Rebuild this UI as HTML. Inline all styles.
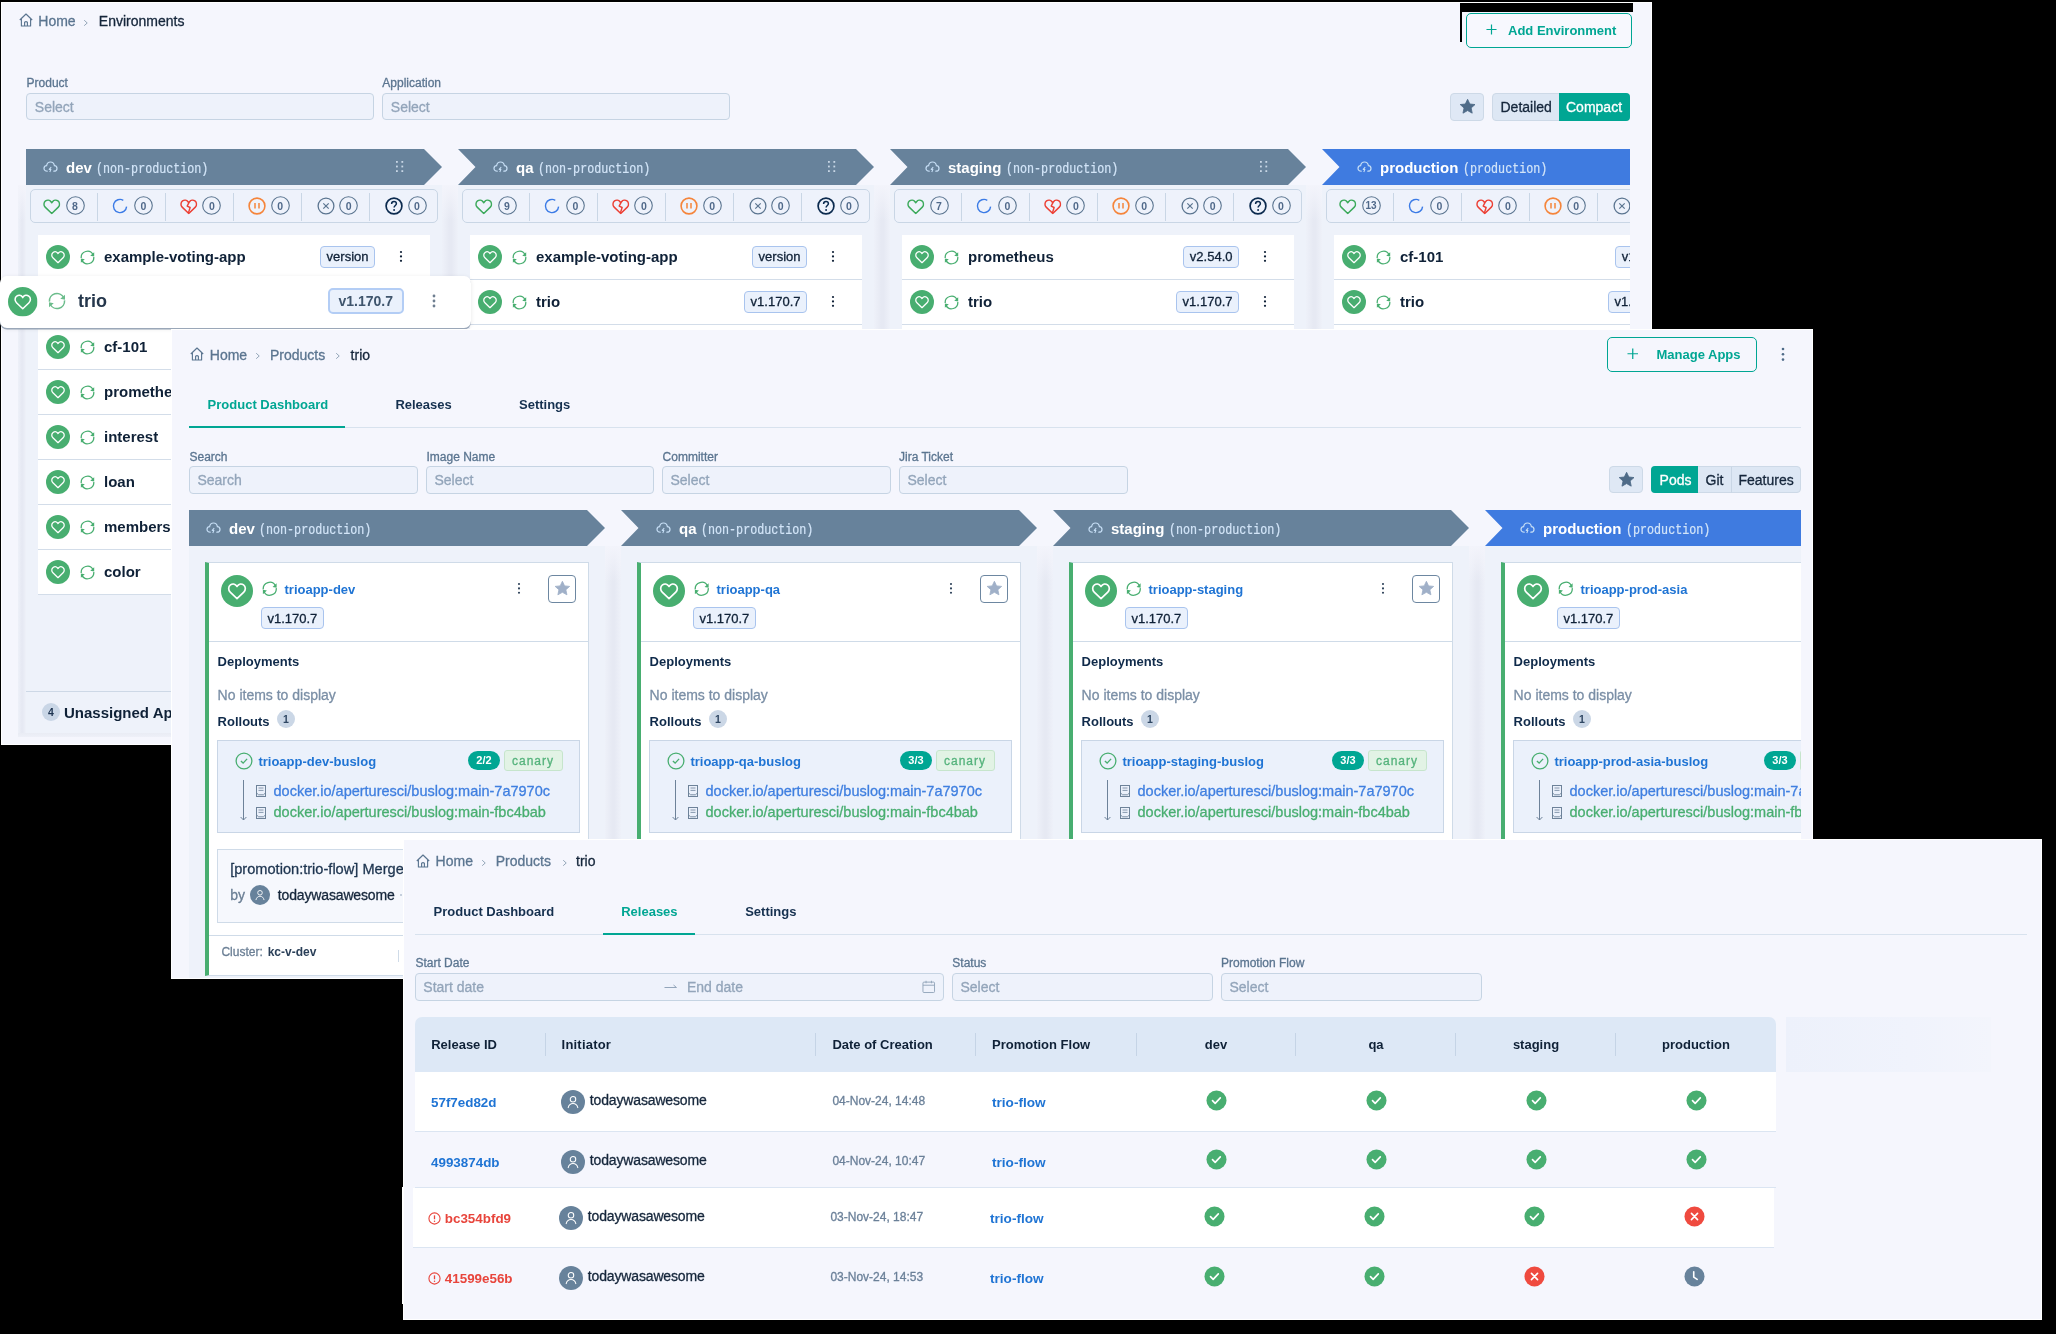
<!DOCTYPE html><html><head><meta charset="utf-8"><style>
*{box-sizing:border-box;margin:0;padding:0}
html,body{width:2056px;height:1334px;overflow:hidden;background:#000}
body{position:relative;font-family:"Liberation Sans",sans-serif}
.p{position:absolute;overflow:hidden;background:#f5f6fd;border:1px solid #fff}
.in{position:absolute;left:0;top:0;width:2056px;height:1334px;will-change:transform}
.t{position:absolute;white-space:nowrap;line-height:1;-webkit-text-stroke-width:0.3px}
.t[style*='font-weight:700']{-webkit-text-stroke-width:0}
.m{font-family:"Liberation Mono",monospace}
.r{position:absolute}
.i{position:absolute;overflow:visible}
.clip{position:absolute;overflow:hidden}
</style></head><body><div id="root" style="position:absolute;left:0;top:0;width:2056px;height:1334px;will-change:transform">

<svg width="0" height="0" style="position:absolute">
<defs>
<symbol id="home" viewBox="0 0 14 14"><path d="M0.8 7 L7 1 L13.2 7 M2.4 5.6 V13 H11.6 V5.6 M5.6 13 V9.2 Q7 8.2 8.4 9.2 V13" fill="none" stroke="currentColor" stroke-width="1.15" stroke-linejoin="round"/></symbol>
<symbol id="sep" viewBox="0 0 6 8"><path d="M1.3 1.2 L4.6 4.2 L1.3 7.2" fill="none" stroke="currentColor" stroke-width="0.95"/></symbol>
<symbol id="heartc" viewBox="0 0 24 24"><circle cx="12" cy="12" r="12" fill="#48ae70"/><path d="M12 17.7 L6.9 12.8 C5.3 11.2 5.4 8.6 7.1 7.4 C8.6 6.3 10.6 6.7 11.6 8 L12 8.6 L12.4 8 C13.4 6.7 15.4 6.3 16.9 7.4 C18.6 8.6 18.7 11.2 17.1 12.8 Z" fill="none" stroke="#fff" stroke-width="1.25" stroke-linejoin="round"/></symbol>
<symbol id="sync" viewBox="0 0 16 16"><path d="M1.3 8.6 A6.7 6.7 0 0 1 13.9 4.9" fill="none" stroke="currentColor" stroke-width="1.35"/><path d="M15.1 2.4 L15.1 6.9 L10.9 6.1 Z" fill="currentColor"/><path d="M14.7 7.4 A6.7 6.7 0 0 1 2.1 11.1" fill="none" stroke="currentColor" stroke-width="1.35"/><path d="M0.9 13.6 L0.9 9.1 L5.1 9.9 Z" fill="currentColor"/></symbol>
<symbol id="hearto" viewBox="0 0 18 16"><path d="M9 15 L2.2 8.4 C0.4 6.6 0.6 3.5 2.6 2 C4.4 0.7 6.9 1.1 8.2 2.8 L9 3.8 L9.8 2.8 C11.1 1.1 13.6 0.7 15.4 2 C17.4 3.5 17.6 6.6 15.8 8.4 Z" fill="none" stroke="currentColor" stroke-width="1.5" stroke-linejoin="round"/></symbol>
<symbol id="heartb" viewBox="0 0 18 16"><path d="M9 15 L2.2 8.4 C0.4 6.6 0.6 3.5 2.6 2 C4.4 0.7 6.9 1.1 8.2 2.8 L9 3.8 L9.8 2.8 C11.1 1.1 13.6 0.7 15.4 2 C17.4 3.5 17.6 6.6 15.8 8.4 Z" fill="none" stroke="currentColor" stroke-width="1.5" stroke-linejoin="round"/><path d="M9.2 3.6 L7.4 7.4 L10.4 8.8 L8.6 14.6" fill="none" stroke="currentColor" stroke-width="1.5" stroke-linejoin="round"/></symbol>
<symbol id="spin" viewBox="0 0 16 16"><path d="M14.6 8.6 A6.6 6.6 0 1 1 11.3 2.28" fill="none" stroke="currentColor" stroke-width="1.4"/></symbol>
<symbol id="pause" viewBox="0 0 18 18"><circle cx="9" cy="9" r="7.9" fill="none" stroke="currentColor" stroke-width="1.6"/><path d="M7 6 V11.5 M11 6 V11.5" stroke="currentColor" stroke-width="1.5"/></symbol>
<symbol id="xc" viewBox="0 0 18 18"><circle cx="9" cy="9" r="7.9" fill="none" stroke="currentColor" stroke-width="1.3"/><path d="M6.3 6.3 L11.7 11.7 M11.7 6.3 L6.3 11.7" stroke="currentColor" stroke-width="1.2"/></symbol>
<symbol id="qc" viewBox="0 0 18 18"><circle cx="9" cy="9" r="7.9" fill="none" stroke="currentColor" stroke-width="1.7"/><path d="M6.6 7 C6.6 5.5 7.7 4.6 9 4.6 C10.3 4.6 11.4 5.5 11.4 6.8 C11.4 8.4 9.1 8.6 9.1 10.6" fill="none" stroke="currentColor" stroke-width="1.5"/><circle cx="9.1" cy="13" r="0.95" fill="currentColor"/></symbol>
<symbol id="cloud" viewBox="0 0 15 12"><path d="M4.2 10.2 C2.2 10.2 1 8.9 1 7.4 C1 5.9 2.2 4.8 3.6 4.7 C4 2.5 5.6 1 7.5 1 C9.4 1 11 2.5 11.4 4.7 C12.8 4.8 14 5.9 14 7.4 C14 8.9 12.8 10.2 10.8 10.2" fill="none" stroke="currentColor" stroke-width="1.2" stroke-linecap="round"/><path d="M8.2 6 L6.2 8.4 L7.9 8.4 L6.8 11" fill="none" stroke="currentColor" stroke-width="1.1" stroke-linejoin="round"/></symbol>
<symbol id="star" viewBox="0 0 16 16"><path d="M8 1.2 L10.1 5.6 L14.9 6.1 L11.3 9.3 L12.3 14.1 L8 11.7 L3.7 14.1 L4.7 9.3 L1.1 6.1 L5.9 5.6 Z" fill="currentColor" stroke="currentColor" stroke-width="0.8" stroke-linejoin="round"/></symbol>
<symbol id="plus" viewBox="0 0 12 12"><path d="M6 0.5 V11.5 M0.5 6 H11.5" stroke="currentColor" stroke-width="1.3"/></symbol>
<symbol id="checko" viewBox="0 0 18 18"><circle cx="9" cy="9" r="7.9" fill="none" stroke="currentColor" stroke-width="1.3"/><path d="M5.9 9.1 L8.1 11.1 L12.1 6.9" fill="none" stroke="currentColor" stroke-width="1.35"/></symbol>
<symbol id="img" viewBox="0 0 10 12"><rect x="0.5" y="0.5" width="9" height="11" fill="none" stroke="currentColor" stroke-width="1"/><path d="M2.5 3 H7.5 M2.5 5.4 H7.5" fill="none" stroke="currentColor" stroke-width="0.8"/><path d="M0.8 8.2 L2.6 9.8 H7.4 L9.2 8.2" fill="none" stroke="currentColor" stroke-width="0.9"/></symbol>
<symbol id="avatar" viewBox="0 0 24 24"><circle cx="12" cy="12" r="12" fill="#67829b"/><circle cx="12" cy="9.3" r="2.75" fill="none" stroke="#fff" stroke-width="1.05"/><path d="M7.2 17.6 C7.8 15 9.7 13.5 12 13.5 C14.3 13.5 16.2 15 16.8 17.6" fill="none" stroke="#fff" stroke-width="1.05" stroke-linecap="round"/></symbol>
<symbol id="okc" viewBox="0 0 22 22"><circle cx="11" cy="11" r="10.5" fill="#48ae70"/><path d="M6.8 11.2 L9.6 14 L15 8.2" fill="none" stroke="#fff" stroke-width="1.7" stroke-linecap="round" stroke-linejoin="round"/></symbol>
<symbol id="errc" viewBox="0 0 22 22"><circle cx="11" cy="11" r="10.5" fill="#ef4a3f"/><path d="M7.8 7.8 L14.2 14.2 M14.2 7.8 L7.8 14.2" fill="none" stroke="#fff" stroke-width="1.7" stroke-linecap="round"/></symbol>
<symbol id="clockc" viewBox="0 0 22 22"><circle cx="11" cy="11" r="10.5" fill="#67829b"/><path d="M10.2 6 V11.6 L13.8 14" fill="none" stroke="#fff" stroke-width="1.7" stroke-linecap="round" stroke-linejoin="round"/></symbol>
<symbol id="warn" viewBox="0 0 14 14"><circle cx="7" cy="7" r="6" fill="none" stroke="currentColor" stroke-width="1.2"/><path d="M7 3.6 V7.8" stroke="currentColor" stroke-width="1.4"/><circle cx="7" cy="10" r="0.8" fill="currentColor"/></symbol>
<symbol id="cal" viewBox="0 0 14 14"><rect x="1" y="2.2" width="12" height="10.8" rx="1" fill="none" stroke="currentColor" stroke-width="1"/><path d="M1 5.4 H13 M4.2 0.8 V3.4 M9.8 0.8 V3.4" stroke="currentColor" stroke-width="1"/></symbol>
</defs>
</svg>

<div class="p" style="left:1px;top:2px;width:1651px;height:743px;"><div class="in" style="left:-2px;top:-3px">
<div class="r" style="left:0.00px;top:0.00px;width:2056.00px;height:1334.00px;background:#f5f6fd"></div>
<svg class="i" style="left:19.00px;top:13.20px;width:14.00px;height:14.00px;color:#5b7590;"><use href="#home"/></svg>
<div class="t" style="left:38.30px;top:14.45px;font-size:14px;color:#5b7590;">Home</div>
<div class="t" style="left:98.80px;top:14.45px;font-size:14px;color:#15263b;">Environments</div>
<svg class="i" style="left:83.20px;top:19.10px;width:5.50px;height:7.60px;color:#8599ad;"><use href="#sep"/></svg>
<div class="r" style="left:1460.00px;top:3.00px;width:173.00px;height:9.00px;background:#000"></div>
<div class="r" style="left:1460.00px;top:3.00px;width:2.00px;height:39.00px;background:#000"></div>
<div class="r" style="left:1466.00px;top:12.50px;width:166.00px;height:35.00px;border:1.5px solid #00a693;border-radius:5px;background:#f7f8fe"></div>
<svg class="i" style="left:1486.00px;top:23.50px;width:11.00px;height:11.00px;color:#00a693;"><use href="#plus"/></svg>
<div class="t" style="left:1508.00px;top:23.79px;font-size:13px;color:#00a693;font-weight:700;">Add Environment</div>
<div class="t" style="left:26.60px;top:76.84px;font-size:12px;color:#5b7590;">Product</div>
<div class="t" style="left:382.30px;top:76.84px;font-size:12px;color:#5b7590;">Application</div>
<div class="r" style="left:26.00px;top:93.30px;width:347.50px;height:27.20px;background:#eef2fb;border:1px solid #c6d4e3;border-radius:4px"></div>
<div class="t" style="left:34.80px;top:100.15px;font-size:14px;color:#93a5ba;">Select</div>
<div class="r" style="left:382.00px;top:93.30px;width:347.50px;height:27.20px;background:#eef2fb;border:1px solid #c6d4e3;border-radius:4px"></div>
<div class="t" style="left:390.80px;top:100.15px;font-size:14px;color:#93a5ba;">Select</div>
<div class="r" style="left:1450.00px;top:93.20px;width:34.00px;height:27.60px;background:#dfe8f5;border:1px solid #cdd9e7;border-radius:4px"></div>
<svg class="i" style="left:1458.60px;top:98.40px;width:17.20px;height:17.20px;color:#4f6b88;"><use href="#star"/></svg>
<div class="r" style="left:1492.00px;top:93.20px;width:138.00px;height:27.60px;background:#dde7f4;border:1px solid #cdd9e7;border-radius:4px"></div>
<div class="r" style="left:1559.00px;top:93.20px;width:71.00px;height:27.60px;background:#00a693;border-radius:0 4px 4px 0"></div>
<div class="t" style="left:1500.50px;top:99.95px;font-size:14px;color:#15263b;">Detailed</div>
<div class="t" style="left:1566.00px;top:99.95px;font-size:14px;color:#fff;">Compact</div>
<div class="clip" style="left:18px;top:140px;width:1612px;height:605px"><div class="in" style="left:-18px;top:-140px">
<div class="r" style="left:26.00px;top:185.00px;width:416.00px;height:551.00px;background:#eef2fa"></div>
<div class="r" style="left:442.00px;top:185.00px;width:16.00px;height:551.00px;background-image:linear-gradient(to bottom,#f3f4fb 0px,rgba(243,244,251,0) 36px),linear-gradient(to right,#eef1f9,#e6e9f3 45%,#e6e9f3 60%,#eef1f9)"></div>
<div class="r" style="left:18.00px;top:185.00px;width:8.00px;height:551.00px;background-image:linear-gradient(to bottom,#f3f4fb 0px,rgba(243,244,251,0) 36px),linear-gradient(to right,#eef1f9,#e6e9f3 45%,#e6e9f3 60%,#eef1f9)"></div>
<div class="r" style="left:458.00px;top:185.00px;width:416.00px;height:551.00px;background:#eef2fa"></div>
<div class="r" style="left:874.00px;top:185.00px;width:16.00px;height:551.00px;background-image:linear-gradient(to bottom,#f3f4fb 0px,rgba(243,244,251,0) 36px),linear-gradient(to right,#eef1f9,#e6e9f3 45%,#e6e9f3 60%,#eef1f9)"></div>
<div class="r" style="left:890.00px;top:185.00px;width:416.00px;height:551.00px;background:#eef2fa"></div>
<div class="r" style="left:1306.00px;top:185.00px;width:16.00px;height:551.00px;background-image:linear-gradient(to bottom,#f3f4fb 0px,rgba(243,244,251,0) 36px),linear-gradient(to right,#eef1f9,#e6e9f3 45%,#e6e9f3 60%,#eef1f9)"></div>
<div class="r" style="left:1322.00px;top:185.00px;width:416.00px;height:551.00px;background:#eef2fa"></div>
<div class="r" style="left:1738.00px;top:185.00px;width:16.00px;height:551.00px;background-image:linear-gradient(to bottom,#f3f4fb 0px,rgba(243,244,251,0) 36px),linear-gradient(to right,#eef1f9,#e6e9f3 45%,#e6e9f3 60%,#eef1f9)"></div>
<svg class="i" style="left:26.00px;top:149.00px;width:416.00px;height:36.00px;" viewBox="0 0 416 36"><polygon points="0.0,0.0 398.0,0.0 416.0,18.0 398.0,36.0 0.0,36.0" fill="#67829b"/></svg>
<svg class="i" style="left:43.00px;top:161.00px;width:15.00px;height:12.00px;color:#c6def5;"><use href="#cloud"/></svg>
<div class="t" style="left:66.00px;top:160.30px;font-size:15px;color:#fff;font-weight:700;">dev</div>
<div class="t m" style="left:96.35px;top:162.07px;font-size:14px;color:#d3e5f8;-webkit-text-stroke-width:0.2px;transform:scaleX(0.836);transform-origin:0 0;">(non-production)</div>
<svg class="i" style="left:395.50px;top:161.40px;width:8.00px;height:12.00px;" viewBox="0 0 8 12"><rect x="0" y="0" width="1.8" height="1.8" fill="#c9d7e6"/><rect x="0" y="4.6" width="1.8" height="1.8" fill="#c9d7e6"/><rect x="0" y="9.2" width="1.8" height="1.8" fill="#c9d7e6"/><rect x="5.4" y="0" width="1.8" height="1.8" fill="#c9d7e6"/><rect x="5.4" y="4.6" width="1.8" height="1.8" fill="#c9d7e6"/><rect x="5.4" y="9.2" width="1.8" height="1.8" fill="#c9d7e6"/></svg>
<div class="r" style="left:30.00px;top:189.00px;width:408.00px;height:33.50px;background:#eef2fb;border:1px solid #c9d6e5;border-radius:5px"></div>
<svg class="i" style="left:43.25px;top:198.55px;width:17.50px;height:15.50px;color:#3daa5c;"><use href="#hearto"/></svg>
<svg class="i" style="left:65.50px;top:196.30px;width:19px;height:19px" viewBox="0 0 19 19"><circle cx="9.5" cy="9.5" r="8.8" fill="none" stroke="#5b7590" stroke-width="1.1"/></svg>
<div class="t" style="left:-125.00px;width:400px;text-align:center;top:200.81px;font-size:10.5px;color:#50698a;font-weight:700;">8</div>
<svg class="i" style="left:112.40px;top:197.80px;width:16.00px;height:16.00px;color:#3b7be6;"><use href="#spin"/></svg>
<svg class="i" style="left:133.90px;top:196.30px;width:19px;height:19px" viewBox="0 0 19 19"><circle cx="9.5" cy="9.5" r="8.8" fill="none" stroke="#5b7590" stroke-width="1.1"/></svg>
<div class="t" style="left:-56.60px;width:400px;text-align:center;top:200.81px;font-size:10.5px;color:#50698a;font-weight:700;">0</div>
<div class="r" style="left:96.60px;top:192.50px;width:1.00px;height:28.00px;background:#c9d6e5"></div>
<svg class="i" style="left:180.05px;top:198.55px;width:17.50px;height:15.50px;color:#ec4136;"><use href="#heartb"/></svg>
<svg class="i" style="left:202.30px;top:196.30px;width:19px;height:19px" viewBox="0 0 19 19"><circle cx="9.5" cy="9.5" r="8.8" fill="none" stroke="#5b7590" stroke-width="1.1"/></svg>
<div class="t" style="left:11.80px;width:400px;text-align:center;top:200.81px;font-size:10.5px;color:#50698a;font-weight:700;">0</div>
<div class="r" style="left:164.70px;top:192.50px;width:1.00px;height:28.00px;background:#c9d6e5"></div>
<svg class="i" style="left:248.20px;top:196.80px;width:18.00px;height:18.00px;color:#f5853b;"><use href="#pause"/></svg>
<svg class="i" style="left:270.70px;top:196.30px;width:19px;height:19px" viewBox="0 0 19 19"><circle cx="9.5" cy="9.5" r="8.8" fill="none" stroke="#5b7590" stroke-width="1.1"/></svg>
<div class="t" style="left:80.20px;width:400px;text-align:center;top:200.81px;font-size:10.5px;color:#50698a;font-weight:700;">0</div>
<div class="r" style="left:232.80px;top:192.50px;width:1.00px;height:28.00px;background:#c9d6e5"></div>
<svg class="i" style="left:316.60px;top:196.80px;width:18.00px;height:18.00px;color:#5b7590;"><use href="#xc"/></svg>
<svg class="i" style="left:339.10px;top:196.30px;width:19px;height:19px" viewBox="0 0 19 19"><circle cx="9.5" cy="9.5" r="8.8" fill="none" stroke="#5b7590" stroke-width="1.1"/></svg>
<div class="t" style="left:148.60px;width:400px;text-align:center;top:200.81px;font-size:10.5px;color:#50698a;font-weight:700;">0</div>
<div class="r" style="left:300.90px;top:192.50px;width:1.00px;height:28.00px;background:#c9d6e5"></div>
<svg class="i" style="left:385.00px;top:196.80px;width:18.00px;height:18.00px;color:#0b2a4e;"><use href="#qc"/></svg>
<svg class="i" style="left:407.50px;top:196.30px;width:19px;height:19px" viewBox="0 0 19 19"><circle cx="9.5" cy="9.5" r="8.8" fill="none" stroke="#5b7590" stroke-width="1.1"/></svg>
<div class="t" style="left:217.00px;width:400px;text-align:center;top:200.81px;font-size:10.5px;color:#50698a;font-weight:700;">0</div>
<div class="r" style="left:369.00px;top:192.50px;width:1.00px;height:28.00px;background:#c9d6e5"></div>
<div class="r" style="left:38.00px;top:235.00px;width:392.00px;height:45.00px;background:#fff;border-bottom:1px solid #d3dde9"></div>
<svg class="i" style="left:46.00px;top:245.00px;width:24.00px;height:24.00px;"><use href="#heartc"/></svg>
<svg class="i" style="left:79.50px;top:249.50px;width:15.00px;height:15.00px;color:#48ae70;"><use href="#sync"/></svg>
<div class="t" style="left:104.00px;top:249.30px;font-size:15px;color:#0f2137;font-weight:700;">example-voting-app</div>
<div class="r" style="left:319.59px;top:246.00px;width:55.91px;height:21.50px;background:#eaf1fc;border:1px solid #a9c4ee;border-radius:4px"></div>
<div class="t" style="left:147.55px;width:400px;text-align:center;top:250.42px;font-size:13px;color:#0f2137;">version</div>
<svg class="i" style="left:398.00px;top:249.10px;width:6.00px;height:14.80px;" viewBox="0 0 6 14.8"><circle cx="3" cy="3.00" r="1.1" fill="#0f2137"/><circle cx="3" cy="7.40" r="1.1" fill="#0f2137"/><circle cx="3" cy="11.80" r="1.1" fill="#0f2137"/></svg>
<div class="r" style="left:38.00px;top:280.00px;width:392.00px;height:45.00px;background:#fff;border-bottom:1px solid #d3dde9"></div>
<div class="r" style="left:38.00px;top:325.00px;width:392.00px;height:45.00px;background:#fff;border-bottom:1px solid #d3dde9"></div>
<svg class="i" style="left:46.00px;top:335.00px;width:24.00px;height:24.00px;"><use href="#heartc"/></svg>
<svg class="i" style="left:79.50px;top:339.50px;width:15.00px;height:15.00px;color:#48ae70;"><use href="#sync"/></svg>
<div class="t" style="left:104.00px;top:339.30px;font-size:15px;color:#0f2137;font-weight:700;">cf-101</div>
<div class="r" style="left:326.09px;top:336.00px;width:49.41px;height:21.50px;background:#eaf1fc;border:1px solid #a9c4ee;border-radius:4px"></div>
<div class="t" style="left:150.79px;width:400px;text-align:center;top:340.42px;font-size:13px;color:#0f2137;">v1.0.0</div>
<svg class="i" style="left:398.00px;top:339.10px;width:6.00px;height:14.80px;" viewBox="0 0 6 14.8"><circle cx="3" cy="3.00" r="1.1" fill="#0f2137"/><circle cx="3" cy="7.40" r="1.1" fill="#0f2137"/><circle cx="3" cy="11.80" r="1.1" fill="#0f2137"/></svg>
<div class="r" style="left:38.00px;top:370.00px;width:392.00px;height:45.00px;background:#fff;border-bottom:1px solid #d3dde9"></div>
<svg class="i" style="left:46.00px;top:380.00px;width:24.00px;height:24.00px;"><use href="#heartc"/></svg>
<svg class="i" style="left:79.50px;top:384.50px;width:15.00px;height:15.00px;color:#48ae70;"><use href="#sync"/></svg>
<div class="t" style="left:104.00px;top:384.30px;font-size:15px;color:#0f2137;font-weight:700;">prometheus</div>
<div class="r" style="left:318.86px;top:381.00px;width:56.64px;height:21.50px;background:#eaf1fc;border:1px solid #a9c4ee;border-radius:4px"></div>
<div class="t" style="left:147.18px;width:400px;text-align:center;top:385.42px;font-size:13px;color:#0f2137;">v2.54.0</div>
<svg class="i" style="left:398.00px;top:384.10px;width:6.00px;height:14.80px;" viewBox="0 0 6 14.8"><circle cx="3" cy="3.00" r="1.1" fill="#0f2137"/><circle cx="3" cy="7.40" r="1.1" fill="#0f2137"/><circle cx="3" cy="11.80" r="1.1" fill="#0f2137"/></svg>
<div class="r" style="left:38.00px;top:415.00px;width:392.00px;height:45.00px;background:#fff;border-bottom:1px solid #d3dde9"></div>
<svg class="i" style="left:46.00px;top:425.00px;width:24.00px;height:24.00px;"><use href="#heartc"/></svg>
<svg class="i" style="left:79.50px;top:429.50px;width:15.00px;height:15.00px;color:#48ae70;"><use href="#sync"/></svg>
<div class="t" style="left:104.00px;top:429.30px;font-size:15px;color:#0f2137;font-weight:700;">interest</div>
<div class="r" style="left:326.09px;top:426.00px;width:49.41px;height:21.50px;background:#eaf1fc;border:1px solid #a9c4ee;border-radius:4px"></div>
<div class="t" style="left:150.79px;width:400px;text-align:center;top:430.42px;font-size:13px;color:#0f2137;">v1.0.0</div>
<svg class="i" style="left:398.00px;top:429.10px;width:6.00px;height:14.80px;" viewBox="0 0 6 14.8"><circle cx="3" cy="3.00" r="1.1" fill="#0f2137"/><circle cx="3" cy="7.40" r="1.1" fill="#0f2137"/><circle cx="3" cy="11.80" r="1.1" fill="#0f2137"/></svg>
<div class="r" style="left:38.00px;top:460.00px;width:392.00px;height:45.00px;background:#fff;border-bottom:1px solid #d3dde9"></div>
<svg class="i" style="left:46.00px;top:470.00px;width:24.00px;height:24.00px;"><use href="#heartc"/></svg>
<svg class="i" style="left:79.50px;top:474.50px;width:15.00px;height:15.00px;color:#48ae70;"><use href="#sync"/></svg>
<div class="t" style="left:104.00px;top:474.30px;font-size:15px;color:#0f2137;font-weight:700;">loan</div>
<div class="r" style="left:326.09px;top:471.00px;width:49.41px;height:21.50px;background:#eaf1fc;border:1px solid #a9c4ee;border-radius:4px"></div>
<div class="t" style="left:150.79px;width:400px;text-align:center;top:475.42px;font-size:13px;color:#0f2137;">v1.0.0</div>
<svg class="i" style="left:398.00px;top:474.10px;width:6.00px;height:14.80px;" viewBox="0 0 6 14.8"><circle cx="3" cy="3.00" r="1.1" fill="#0f2137"/><circle cx="3" cy="7.40" r="1.1" fill="#0f2137"/><circle cx="3" cy="11.80" r="1.1" fill="#0f2137"/></svg>
<div class="r" style="left:38.00px;top:505.00px;width:392.00px;height:45.00px;background:#fff;border-bottom:1px solid #d3dde9"></div>
<svg class="i" style="left:46.00px;top:515.00px;width:24.00px;height:24.00px;"><use href="#heartc"/></svg>
<svg class="i" style="left:79.50px;top:519.50px;width:15.00px;height:15.00px;color:#48ae70;"><use href="#sync"/></svg>
<div class="t" style="left:104.00px;top:519.30px;font-size:15px;color:#0f2137;font-weight:700;">membership</div>
<div class="r" style="left:326.09px;top:516.00px;width:49.41px;height:21.50px;background:#eaf1fc;border:1px solid #a9c4ee;border-radius:4px"></div>
<div class="t" style="left:150.79px;width:400px;text-align:center;top:520.42px;font-size:13px;color:#0f2137;">v1.0.0</div>
<svg class="i" style="left:398.00px;top:519.10px;width:6.00px;height:14.80px;" viewBox="0 0 6 14.8"><circle cx="3" cy="3.00" r="1.1" fill="#0f2137"/><circle cx="3" cy="7.40" r="1.1" fill="#0f2137"/><circle cx="3" cy="11.80" r="1.1" fill="#0f2137"/></svg>
<div class="r" style="left:38.00px;top:550.00px;width:392.00px;height:45.00px;background:#fff;border-bottom:1px solid #d3dde9"></div>
<svg class="i" style="left:46.00px;top:560.00px;width:24.00px;height:24.00px;"><use href="#heartc"/></svg>
<svg class="i" style="left:79.50px;top:564.50px;width:15.00px;height:15.00px;color:#48ae70;"><use href="#sync"/></svg>
<div class="t" style="left:104.00px;top:564.30px;font-size:15px;color:#0f2137;font-weight:700;">color</div>
<div class="r" style="left:326.09px;top:561.00px;width:49.41px;height:21.50px;background:#eaf1fc;border:1px solid #a9c4ee;border-radius:4px"></div>
<div class="t" style="left:150.79px;width:400px;text-align:center;top:565.42px;font-size:13px;color:#0f2137;">v1.0.0</div>
<svg class="i" style="left:398.00px;top:564.10px;width:6.00px;height:14.80px;" viewBox="0 0 6 14.8"><circle cx="3" cy="3.00" r="1.1" fill="#0f2137"/><circle cx="3" cy="7.40" r="1.1" fill="#0f2137"/><circle cx="3" cy="11.80" r="1.1" fill="#0f2137"/></svg>
<svg class="i" style="left:458.00px;top:149.00px;width:416.00px;height:36.00px;" viewBox="0 0 416 36"><polygon points="0.0,0.0 398.0,0.0 416.0,18.0 398.0,36.0 0.0,36.0 17.5,18.0" fill="#67829b"/></svg>
<svg class="i" style="left:493.00px;top:161.00px;width:15.00px;height:12.00px;color:#c6def5;"><use href="#cloud"/></svg>
<div class="t" style="left:516.00px;top:160.30px;font-size:15px;color:#fff;font-weight:700;">qa</div>
<div class="t m" style="left:538.00px;top:162.07px;font-size:14px;color:#d3e5f8;-webkit-text-stroke-width:0.2px;transform:scaleX(0.836);transform-origin:0 0;">(non-production)</div>
<svg class="i" style="left:827.50px;top:161.40px;width:8.00px;height:12.00px;" viewBox="0 0 8 12"><rect x="0" y="0" width="1.8" height="1.8" fill="#c9d7e6"/><rect x="0" y="4.6" width="1.8" height="1.8" fill="#c9d7e6"/><rect x="0" y="9.2" width="1.8" height="1.8" fill="#c9d7e6"/><rect x="5.4" y="0" width="1.8" height="1.8" fill="#c9d7e6"/><rect x="5.4" y="4.6" width="1.8" height="1.8" fill="#c9d7e6"/><rect x="5.4" y="9.2" width="1.8" height="1.8" fill="#c9d7e6"/></svg>
<div class="r" style="left:462.00px;top:189.00px;width:408.00px;height:33.50px;background:#eef2fb;border:1px solid #c9d6e5;border-radius:5px"></div>
<svg class="i" style="left:475.25px;top:198.55px;width:17.50px;height:15.50px;color:#3daa5c;"><use href="#hearto"/></svg>
<svg class="i" style="left:497.50px;top:196.30px;width:19px;height:19px" viewBox="0 0 19 19"><circle cx="9.5" cy="9.5" r="8.8" fill="none" stroke="#5b7590" stroke-width="1.1"/></svg>
<div class="t" style="left:307.00px;width:400px;text-align:center;top:200.81px;font-size:10.5px;color:#50698a;font-weight:700;">9</div>
<svg class="i" style="left:544.40px;top:197.80px;width:16.00px;height:16.00px;color:#3b7be6;"><use href="#spin"/></svg>
<svg class="i" style="left:565.90px;top:196.30px;width:19px;height:19px" viewBox="0 0 19 19"><circle cx="9.5" cy="9.5" r="8.8" fill="none" stroke="#5b7590" stroke-width="1.1"/></svg>
<div class="t" style="left:375.40px;width:400px;text-align:center;top:200.81px;font-size:10.5px;color:#50698a;font-weight:700;">0</div>
<div class="r" style="left:528.60px;top:192.50px;width:1.00px;height:28.00px;background:#c9d6e5"></div>
<svg class="i" style="left:612.05px;top:198.55px;width:17.50px;height:15.50px;color:#ec4136;"><use href="#heartb"/></svg>
<svg class="i" style="left:634.30px;top:196.30px;width:19px;height:19px" viewBox="0 0 19 19"><circle cx="9.5" cy="9.5" r="8.8" fill="none" stroke="#5b7590" stroke-width="1.1"/></svg>
<div class="t" style="left:443.80px;width:400px;text-align:center;top:200.81px;font-size:10.5px;color:#50698a;font-weight:700;">0</div>
<div class="r" style="left:596.70px;top:192.50px;width:1.00px;height:28.00px;background:#c9d6e5"></div>
<svg class="i" style="left:680.20px;top:196.80px;width:18.00px;height:18.00px;color:#f5853b;"><use href="#pause"/></svg>
<svg class="i" style="left:702.70px;top:196.30px;width:19px;height:19px" viewBox="0 0 19 19"><circle cx="9.5" cy="9.5" r="8.8" fill="none" stroke="#5b7590" stroke-width="1.1"/></svg>
<div class="t" style="left:512.20px;width:400px;text-align:center;top:200.81px;font-size:10.5px;color:#50698a;font-weight:700;">0</div>
<div class="r" style="left:664.80px;top:192.50px;width:1.00px;height:28.00px;background:#c9d6e5"></div>
<svg class="i" style="left:748.60px;top:196.80px;width:18.00px;height:18.00px;color:#5b7590;"><use href="#xc"/></svg>
<svg class="i" style="left:771.10px;top:196.30px;width:19px;height:19px" viewBox="0 0 19 19"><circle cx="9.5" cy="9.5" r="8.8" fill="none" stroke="#5b7590" stroke-width="1.1"/></svg>
<div class="t" style="left:580.60px;width:400px;text-align:center;top:200.81px;font-size:10.5px;color:#50698a;font-weight:700;">0</div>
<div class="r" style="left:732.90px;top:192.50px;width:1.00px;height:28.00px;background:#c9d6e5"></div>
<svg class="i" style="left:817.00px;top:196.80px;width:18.00px;height:18.00px;color:#0b2a4e;"><use href="#qc"/></svg>
<svg class="i" style="left:839.50px;top:196.30px;width:19px;height:19px" viewBox="0 0 19 19"><circle cx="9.5" cy="9.5" r="8.8" fill="none" stroke="#5b7590" stroke-width="1.1"/></svg>
<div class="t" style="left:649.00px;width:400px;text-align:center;top:200.81px;font-size:10.5px;color:#50698a;font-weight:700;">0</div>
<div class="r" style="left:801.00px;top:192.50px;width:1.00px;height:28.00px;background:#c9d6e5"></div>
<div class="r" style="left:470.00px;top:235.00px;width:392.00px;height:45.00px;background:#fff;border-bottom:1px solid #d3dde9"></div>
<svg class="i" style="left:478.00px;top:245.00px;width:24.00px;height:24.00px;"><use href="#heartc"/></svg>
<svg class="i" style="left:511.50px;top:249.50px;width:15.00px;height:15.00px;color:#48ae70;"><use href="#sync"/></svg>
<div class="t" style="left:536.00px;top:249.30px;font-size:15px;color:#0f2137;font-weight:700;">example-voting-app</div>
<div class="r" style="left:751.59px;top:246.00px;width:55.91px;height:21.50px;background:#eaf1fc;border:1px solid #a9c4ee;border-radius:4px"></div>
<div class="t" style="left:579.55px;width:400px;text-align:center;top:250.42px;font-size:13px;color:#0f2137;">version</div>
<svg class="i" style="left:830.00px;top:249.10px;width:6.00px;height:14.80px;" viewBox="0 0 6 14.8"><circle cx="3" cy="3.00" r="1.1" fill="#0f2137"/><circle cx="3" cy="7.40" r="1.1" fill="#0f2137"/><circle cx="3" cy="11.80" r="1.1" fill="#0f2137"/></svg>
<div class="r" style="left:470.00px;top:280.00px;width:392.00px;height:45.00px;background:#fff;border-bottom:1px solid #d3dde9"></div>
<svg class="i" style="left:478.00px;top:290.00px;width:24.00px;height:24.00px;"><use href="#heartc"/></svg>
<svg class="i" style="left:511.50px;top:294.50px;width:15.00px;height:15.00px;color:#48ae70;"><use href="#sync"/></svg>
<div class="t" style="left:536.00px;top:294.30px;font-size:15px;color:#0f2137;font-weight:700;">trio</div>
<div class="r" style="left:743.63px;top:291.00px;width:63.87px;height:21.50px;background:#eaf1fc;border:1px solid #a9c4ee;border-radius:4px"></div>
<div class="t" style="left:575.56px;width:400px;text-align:center;top:295.42px;font-size:13px;color:#0f2137;">v1.170.7</div>
<svg class="i" style="left:830.00px;top:294.10px;width:6.00px;height:14.80px;" viewBox="0 0 6 14.8"><circle cx="3" cy="3.00" r="1.1" fill="#0f2137"/><circle cx="3" cy="7.40" r="1.1" fill="#0f2137"/><circle cx="3" cy="11.80" r="1.1" fill="#0f2137"/></svg>
<div class="r" style="left:470.00px;top:325.00px;width:392.00px;height:45.00px;background:#fff;border-bottom:1px solid #d3dde9"></div>
<svg class="i" style="left:478.00px;top:335.00px;width:24.00px;height:24.00px;"><use href="#heartc"/></svg>
<svg class="i" style="left:511.50px;top:339.50px;width:15.00px;height:15.00px;color:#48ae70;"><use href="#sync"/></svg>
<div class="t" style="left:536.00px;top:339.30px;font-size:15px;color:#0f2137;font-weight:700;">cf-101</div>
<div class="r" style="left:758.09px;top:336.00px;width:49.41px;height:21.50px;background:#eaf1fc;border:1px solid #a9c4ee;border-radius:4px"></div>
<div class="t" style="left:582.79px;width:400px;text-align:center;top:340.42px;font-size:13px;color:#0f2137;">v1.0.0</div>
<svg class="i" style="left:830.00px;top:339.10px;width:6.00px;height:14.80px;" viewBox="0 0 6 14.8"><circle cx="3" cy="3.00" r="1.1" fill="#0f2137"/><circle cx="3" cy="7.40" r="1.1" fill="#0f2137"/><circle cx="3" cy="11.80" r="1.1" fill="#0f2137"/></svg>
<svg class="i" style="left:890.00px;top:149.00px;width:416.00px;height:36.00px;" viewBox="0 0 416 36"><polygon points="0.0,0.0 398.0,0.0 416.0,18.0 398.0,36.0 0.0,36.0 17.5,18.0" fill="#67829b"/></svg>
<svg class="i" style="left:925.00px;top:161.00px;width:15.00px;height:12.00px;color:#c6def5;"><use href="#cloud"/></svg>
<div class="t" style="left:948.00px;top:160.30px;font-size:15px;color:#fff;font-weight:700;">staging</div>
<div class="t m" style="left:1005.83px;top:162.07px;font-size:14px;color:#d3e5f8;-webkit-text-stroke-width:0.2px;transform:scaleX(0.836);transform-origin:0 0;">(non-production)</div>
<svg class="i" style="left:1259.50px;top:161.40px;width:8.00px;height:12.00px;" viewBox="0 0 8 12"><rect x="0" y="0" width="1.8" height="1.8" fill="#c9d7e6"/><rect x="0" y="4.6" width="1.8" height="1.8" fill="#c9d7e6"/><rect x="0" y="9.2" width="1.8" height="1.8" fill="#c9d7e6"/><rect x="5.4" y="0" width="1.8" height="1.8" fill="#c9d7e6"/><rect x="5.4" y="4.6" width="1.8" height="1.8" fill="#c9d7e6"/><rect x="5.4" y="9.2" width="1.8" height="1.8" fill="#c9d7e6"/></svg>
<div class="r" style="left:894.00px;top:189.00px;width:408.00px;height:33.50px;background:#eef2fb;border:1px solid #c9d6e5;border-radius:5px"></div>
<svg class="i" style="left:907.25px;top:198.55px;width:17.50px;height:15.50px;color:#3daa5c;"><use href="#hearto"/></svg>
<svg class="i" style="left:929.50px;top:196.30px;width:19px;height:19px" viewBox="0 0 19 19"><circle cx="9.5" cy="9.5" r="8.8" fill="none" stroke="#5b7590" stroke-width="1.1"/></svg>
<div class="t" style="left:739.00px;width:400px;text-align:center;top:200.81px;font-size:10.5px;color:#50698a;font-weight:700;">7</div>
<svg class="i" style="left:976.40px;top:197.80px;width:16.00px;height:16.00px;color:#3b7be6;"><use href="#spin"/></svg>
<svg class="i" style="left:997.90px;top:196.30px;width:19px;height:19px" viewBox="0 0 19 19"><circle cx="9.5" cy="9.5" r="8.8" fill="none" stroke="#5b7590" stroke-width="1.1"/></svg>
<div class="t" style="left:807.40px;width:400px;text-align:center;top:200.81px;font-size:10.5px;color:#50698a;font-weight:700;">0</div>
<div class="r" style="left:960.60px;top:192.50px;width:1.00px;height:28.00px;background:#c9d6e5"></div>
<svg class="i" style="left:1044.05px;top:198.55px;width:17.50px;height:15.50px;color:#ec4136;"><use href="#heartb"/></svg>
<svg class="i" style="left:1066.30px;top:196.30px;width:19px;height:19px" viewBox="0 0 19 19"><circle cx="9.5" cy="9.5" r="8.8" fill="none" stroke="#5b7590" stroke-width="1.1"/></svg>
<div class="t" style="left:875.80px;width:400px;text-align:center;top:200.81px;font-size:10.5px;color:#50698a;font-weight:700;">0</div>
<div class="r" style="left:1028.70px;top:192.50px;width:1.00px;height:28.00px;background:#c9d6e5"></div>
<svg class="i" style="left:1112.20px;top:196.80px;width:18.00px;height:18.00px;color:#f5853b;"><use href="#pause"/></svg>
<svg class="i" style="left:1134.70px;top:196.30px;width:19px;height:19px" viewBox="0 0 19 19"><circle cx="9.5" cy="9.5" r="8.8" fill="none" stroke="#5b7590" stroke-width="1.1"/></svg>
<div class="t" style="left:944.20px;width:400px;text-align:center;top:200.81px;font-size:10.5px;color:#50698a;font-weight:700;">0</div>
<div class="r" style="left:1096.80px;top:192.50px;width:1.00px;height:28.00px;background:#c9d6e5"></div>
<svg class="i" style="left:1180.60px;top:196.80px;width:18.00px;height:18.00px;color:#5b7590;"><use href="#xc"/></svg>
<svg class="i" style="left:1203.10px;top:196.30px;width:19px;height:19px" viewBox="0 0 19 19"><circle cx="9.5" cy="9.5" r="8.8" fill="none" stroke="#5b7590" stroke-width="1.1"/></svg>
<div class="t" style="left:1012.60px;width:400px;text-align:center;top:200.81px;font-size:10.5px;color:#50698a;font-weight:700;">0</div>
<div class="r" style="left:1164.90px;top:192.50px;width:1.00px;height:28.00px;background:#c9d6e5"></div>
<svg class="i" style="left:1249.00px;top:196.80px;width:18.00px;height:18.00px;color:#0b2a4e;"><use href="#qc"/></svg>
<svg class="i" style="left:1271.50px;top:196.30px;width:19px;height:19px" viewBox="0 0 19 19"><circle cx="9.5" cy="9.5" r="8.8" fill="none" stroke="#5b7590" stroke-width="1.1"/></svg>
<div class="t" style="left:1081.00px;width:400px;text-align:center;top:200.81px;font-size:10.5px;color:#50698a;font-weight:700;">0</div>
<div class="r" style="left:1233.00px;top:192.50px;width:1.00px;height:28.00px;background:#c9d6e5"></div>
<div class="r" style="left:902.00px;top:235.00px;width:392.00px;height:45.00px;background:#fff;border-bottom:1px solid #d3dde9"></div>
<svg class="i" style="left:910.00px;top:245.00px;width:24.00px;height:24.00px;"><use href="#heartc"/></svg>
<svg class="i" style="left:943.50px;top:249.50px;width:15.00px;height:15.00px;color:#48ae70;"><use href="#sync"/></svg>
<div class="t" style="left:968.00px;top:249.30px;font-size:15px;color:#0f2137;font-weight:700;">prometheus</div>
<div class="r" style="left:1182.86px;top:246.00px;width:56.64px;height:21.50px;background:#eaf1fc;border:1px solid #a9c4ee;border-radius:4px"></div>
<div class="t" style="left:1011.18px;width:400px;text-align:center;top:250.42px;font-size:13px;color:#0f2137;">v2.54.0</div>
<svg class="i" style="left:1262.00px;top:249.10px;width:6.00px;height:14.80px;" viewBox="0 0 6 14.8"><circle cx="3" cy="3.00" r="1.1" fill="#0f2137"/><circle cx="3" cy="7.40" r="1.1" fill="#0f2137"/><circle cx="3" cy="11.80" r="1.1" fill="#0f2137"/></svg>
<div class="r" style="left:902.00px;top:280.00px;width:392.00px;height:45.00px;background:#fff;border-bottom:1px solid #d3dde9"></div>
<svg class="i" style="left:910.00px;top:290.00px;width:24.00px;height:24.00px;"><use href="#heartc"/></svg>
<svg class="i" style="left:943.50px;top:294.50px;width:15.00px;height:15.00px;color:#48ae70;"><use href="#sync"/></svg>
<div class="t" style="left:968.00px;top:294.30px;font-size:15px;color:#0f2137;font-weight:700;">trio</div>
<div class="r" style="left:1175.63px;top:291.00px;width:63.87px;height:21.50px;background:#eaf1fc;border:1px solid #a9c4ee;border-radius:4px"></div>
<div class="t" style="left:1007.56px;width:400px;text-align:center;top:295.42px;font-size:13px;color:#0f2137;">v1.170.7</div>
<svg class="i" style="left:1262.00px;top:294.10px;width:6.00px;height:14.80px;" viewBox="0 0 6 14.8"><circle cx="3" cy="3.00" r="1.1" fill="#0f2137"/><circle cx="3" cy="7.40" r="1.1" fill="#0f2137"/><circle cx="3" cy="11.80" r="1.1" fill="#0f2137"/></svg>
<div class="r" style="left:902.00px;top:325.00px;width:392.00px;height:45.00px;background:#fff;border-bottom:1px solid #d3dde9"></div>
<svg class="i" style="left:910.00px;top:335.00px;width:24.00px;height:24.00px;"><use href="#heartc"/></svg>
<svg class="i" style="left:943.50px;top:339.50px;width:15.00px;height:15.00px;color:#48ae70;"><use href="#sync"/></svg>
<div class="t" style="left:968.00px;top:339.30px;font-size:15px;color:#0f2137;font-weight:700;">cf-101</div>
<div class="r" style="left:1190.09px;top:336.00px;width:49.41px;height:21.50px;background:#eaf1fc;border:1px solid #a9c4ee;border-radius:4px"></div>
<div class="t" style="left:1014.79px;width:400px;text-align:center;top:340.42px;font-size:13px;color:#0f2137;">v1.0.0</div>
<svg class="i" style="left:1262.00px;top:339.10px;width:6.00px;height:14.80px;" viewBox="0 0 6 14.8"><circle cx="3" cy="3.00" r="1.1" fill="#0f2137"/><circle cx="3" cy="7.40" r="1.1" fill="#0f2137"/><circle cx="3" cy="11.80" r="1.1" fill="#0f2137"/></svg>
<svg class="i" style="left:1322.00px;top:149.00px;width:416.00px;height:36.00px;" viewBox="0 0 416 36"><polygon points="0.0,0.0 398.0,0.0 416.0,18.0 398.0,36.0 0.0,36.0 17.5,18.0" fill="#3f7be0"/></svg>
<svg class="i" style="left:1357.00px;top:161.00px;width:15.00px;height:12.00px;color:#c6def5;"><use href="#cloud"/></svg>
<div class="t" style="left:1380.00px;top:160.30px;font-size:15px;color:#fff;font-weight:700;">production</div>
<div class="t m" style="left:1462.82px;top:162.07px;font-size:14px;color:#d3e5f8;-webkit-text-stroke-width:0.2px;transform:scaleX(0.836);transform-origin:0 0;">(production)</div>
<div class="r" style="left:1326.00px;top:189.00px;width:408.00px;height:33.50px;background:#eef2fb;border:1px solid #c9d6e5;border-radius:5px"></div>
<svg class="i" style="left:1339.25px;top:198.55px;width:17.50px;height:15.50px;color:#3daa5c;"><use href="#hearto"/></svg>
<svg class="i" style="left:1361.50px;top:196.30px;width:19px;height:19px" viewBox="0 0 19 19"><circle cx="9.5" cy="9.5" r="8.8" fill="none" stroke="#5b7590" stroke-width="1.1"/></svg>
<div class="t" style="left:1171.00px;width:400px;text-align:center;top:201.23px;font-size:10px;color:#50698a;font-weight:700;">13</div>
<svg class="i" style="left:1408.40px;top:197.80px;width:16.00px;height:16.00px;color:#3b7be6;"><use href="#spin"/></svg>
<svg class="i" style="left:1429.90px;top:196.30px;width:19px;height:19px" viewBox="0 0 19 19"><circle cx="9.5" cy="9.5" r="8.8" fill="none" stroke="#5b7590" stroke-width="1.1"/></svg>
<div class="t" style="left:1239.40px;width:400px;text-align:center;top:200.81px;font-size:10.5px;color:#50698a;font-weight:700;">0</div>
<div class="r" style="left:1392.60px;top:192.50px;width:1.00px;height:28.00px;background:#c9d6e5"></div>
<svg class="i" style="left:1476.05px;top:198.55px;width:17.50px;height:15.50px;color:#ec4136;"><use href="#heartb"/></svg>
<svg class="i" style="left:1498.30px;top:196.30px;width:19px;height:19px" viewBox="0 0 19 19"><circle cx="9.5" cy="9.5" r="8.8" fill="none" stroke="#5b7590" stroke-width="1.1"/></svg>
<div class="t" style="left:1307.80px;width:400px;text-align:center;top:200.81px;font-size:10.5px;color:#50698a;font-weight:700;">0</div>
<div class="r" style="left:1460.70px;top:192.50px;width:1.00px;height:28.00px;background:#c9d6e5"></div>
<svg class="i" style="left:1544.20px;top:196.80px;width:18.00px;height:18.00px;color:#f5853b;"><use href="#pause"/></svg>
<svg class="i" style="left:1566.70px;top:196.30px;width:19px;height:19px" viewBox="0 0 19 19"><circle cx="9.5" cy="9.5" r="8.8" fill="none" stroke="#5b7590" stroke-width="1.1"/></svg>
<div class="t" style="left:1376.20px;width:400px;text-align:center;top:200.81px;font-size:10.5px;color:#50698a;font-weight:700;">0</div>
<div class="r" style="left:1528.80px;top:192.50px;width:1.00px;height:28.00px;background:#c9d6e5"></div>
<svg class="i" style="left:1612.60px;top:196.80px;width:18.00px;height:18.00px;color:#5b7590;"><use href="#xc"/></svg>
<svg class="i" style="left:1635.10px;top:196.30px;width:19px;height:19px" viewBox="0 0 19 19"><circle cx="9.5" cy="9.5" r="8.8" fill="none" stroke="#5b7590" stroke-width="1.1"/></svg>
<div class="t" style="left:1444.60px;width:400px;text-align:center;top:200.81px;font-size:10.5px;color:#50698a;font-weight:700;">0</div>
<div class="r" style="left:1596.90px;top:192.50px;width:1.00px;height:28.00px;background:#c9d6e5"></div>
<svg class="i" style="left:1681.00px;top:196.80px;width:18.00px;height:18.00px;color:#0b2a4e;"><use href="#qc"/></svg>
<svg class="i" style="left:1703.50px;top:196.30px;width:19px;height:19px" viewBox="0 0 19 19"><circle cx="9.5" cy="9.5" r="8.8" fill="none" stroke="#5b7590" stroke-width="1.1"/></svg>
<div class="t" style="left:1513.00px;width:400px;text-align:center;top:200.81px;font-size:10.5px;color:#50698a;font-weight:700;">0</div>
<div class="r" style="left:1665.00px;top:192.50px;width:1.00px;height:28.00px;background:#c9d6e5"></div>
<div class="r" style="left:1334.00px;top:235.00px;width:392.00px;height:45.00px;background:#fff;border-bottom:1px solid #d3dde9"></div>
<svg class="i" style="left:1342.00px;top:245.00px;width:24.00px;height:24.00px;"><use href="#heartc"/></svg>
<svg class="i" style="left:1375.50px;top:249.50px;width:15.00px;height:15.00px;color:#48ae70;"><use href="#sync"/></svg>
<div class="t" style="left:1400.00px;top:249.30px;font-size:15px;color:#0f2137;font-weight:700;">cf-101</div>
<div class="r" style="left:1614.86px;top:246.00px;width:56.64px;height:21.50px;background:#eaf1fc;border:1px solid #a9c4ee;border-radius:4px"></div>
<div class="t" style="left:1443.18px;width:400px;text-align:center;top:250.42px;font-size:13px;color:#0f2137;">v1.0.12</div>
<svg class="i" style="left:1694.00px;top:249.10px;width:6.00px;height:14.80px;" viewBox="0 0 6 14.8"><circle cx="3" cy="3.00" r="1.1" fill="#0f2137"/><circle cx="3" cy="7.40" r="1.1" fill="#0f2137"/><circle cx="3" cy="11.80" r="1.1" fill="#0f2137"/></svg>
<div class="r" style="left:1334.00px;top:280.00px;width:392.00px;height:45.00px;background:#fff;border-bottom:1px solid #d3dde9"></div>
<svg class="i" style="left:1342.00px;top:290.00px;width:24.00px;height:24.00px;"><use href="#heartc"/></svg>
<svg class="i" style="left:1375.50px;top:294.50px;width:15.00px;height:15.00px;color:#48ae70;"><use href="#sync"/></svg>
<div class="t" style="left:1400.00px;top:294.30px;font-size:15px;color:#0f2137;font-weight:700;">trio</div>
<div class="r" style="left:1607.63px;top:291.00px;width:63.87px;height:21.50px;background:#eaf1fc;border:1px solid #a9c4ee;border-radius:4px"></div>
<div class="t" style="left:1439.56px;width:400px;text-align:center;top:295.42px;font-size:13px;color:#0f2137;">v1.170.7</div>
<svg class="i" style="left:1694.00px;top:294.10px;width:6.00px;height:14.80px;" viewBox="0 0 6 14.8"><circle cx="3" cy="3.00" r="1.1" fill="#0f2137"/><circle cx="3" cy="7.40" r="1.1" fill="#0f2137"/><circle cx="3" cy="11.80" r="1.1" fill="#0f2137"/></svg>
<div class="r" style="left:1334.00px;top:325.00px;width:392.00px;height:45.00px;background:#fff;border-bottom:1px solid #d3dde9"></div>
<svg class="i" style="left:1342.00px;top:335.00px;width:24.00px;height:24.00px;"><use href="#heartc"/></svg>
<svg class="i" style="left:1375.50px;top:339.50px;width:15.00px;height:15.00px;color:#48ae70;"><use href="#sync"/></svg>
<div class="t" style="left:1400.00px;top:339.30px;font-size:15px;color:#0f2137;font-weight:700;">prometheus</div>
<div class="r" style="left:1614.86px;top:336.00px;width:56.64px;height:21.50px;background:#eaf1fc;border:1px solid #a9c4ee;border-radius:4px"></div>
<div class="t" style="left:1443.18px;width:400px;text-align:center;top:340.42px;font-size:13px;color:#0f2137;">v2.54.0</div>
<svg class="i" style="left:1694.00px;top:339.10px;width:6.00px;height:14.80px;" viewBox="0 0 6 14.8"><circle cx="3" cy="3.00" r="1.1" fill="#0f2137"/><circle cx="3" cy="7.40" r="1.1" fill="#0f2137"/><circle cx="3" cy="11.80" r="1.1" fill="#0f2137"/></svg>
<div class="r" style="left:26.00px;top:691.00px;width:416.00px;height:1.00px;background:#cdd8e6"></div>
<svg class="i" style="left:42px;top:703px;width:18px;height:18px" viewBox="0 0 18 18"><circle cx="9" cy="9" r="9" fill="#c9d6e6"/></svg>
<div class="t" style="left:-149.00px;width:400px;text-align:center;top:707.11px;font-size:10.5px;color:#1c3350;font-weight:700;">4</div>
<div class="t" style="left:64.00px;top:704.80px;font-size:15px;color:#0f2137;font-weight:700;">Unassigned Apps</div>
<div class="r" style="left:18.00px;top:733.00px;width:432.00px;height:4.00px;background:linear-gradient(to bottom,#e9ecf4,#eef0f8)"></div>
</div></div>
</div></div>
<div class="r" style="left:0.00px;top:276.00px;width:471.00px;height:52.00px;background:#fff;border-radius:7px;box-shadow:0 1.5px 0 #9aa7b8, 0 1px 4px rgba(0,0,0,0.10)"></div>
<div style="position:absolute;left:0;top:0;width:2056px;height:1334px;filter:blur(0.3px)">
<svg class="i" style="left:7.50px;top:286.50px;width:29.50px;height:29.50px;"><use href="#heartc"/></svg>
<svg class="i" style="left:48.00px;top:292.00px;width:18.00px;height:18.00px;color:#6cbd8c;"><use href="#sync"/></svg>
<div class="t" style="left:78.00px;top:291.76px;font-size:18px;color:#25374c;font-weight:700;">trio</div>
<div class="r" style="left:328.00px;top:288.00px;width:75.50px;height:25.50px;background:#eaf1fc;border:2px solid #b3cdf5;border-radius:5px"></div>
<div class="t" style="left:165.80px;width:400px;text-align:center;top:294.15px;font-size:14px;color:#3f556d;font-weight:700;">v1.170.7</div>
<svg class="i" style="left:430.50px;top:293.00px;width:6.00px;height:16.00px;" viewBox="0 0 6 16"><circle cx="3" cy="3.00" r="1.4" fill="#6e7e90"/><circle cx="3" cy="8.00" r="1.4" fill="#6e7e90"/><circle cx="3" cy="13.00" r="1.4" fill="#6e7e90"/></svg>
</div>
<div class="p" style="left:171px;top:329px;width:1642px;height:650px;"><div class="in" style="left:-172px;top:-330px">
<div class="r" style="left:0.00px;top:0.00px;width:2056.00px;height:1334.00px;background:#f5f6fd"></div>
<svg class="i" style="left:190.00px;top:346.50px;width:14.00px;height:14.00px;color:#5b7590;"><use href="#home"/></svg>
<div class="t" style="left:209.80px;top:347.65px;font-size:14px;color:#5b7590;">Home</div>
<div class="t" style="left:270.00px;top:347.65px;font-size:14px;color:#5b7590;">Products</div>
<div class="t" style="left:350.60px;top:347.65px;font-size:14px;color:#15263b;">trio</div>
<svg class="i" style="left:254.70px;top:352.30px;width:5.50px;height:7.60px;color:#8599ad;"><use href="#sep"/></svg>
<svg class="i" style="left:335.20px;top:352.30px;width:5.50px;height:7.60px;color:#8599ad;"><use href="#sep"/></svg>
<div class="r" style="left:1607.00px;top:336.50px;width:150.00px;height:35.50px;border:1.5px solid #00a693;border-radius:5px"></div>
<svg class="i" style="left:1626.50px;top:347.50px;width:11.50px;height:11.50px;color:#00a693;"><use href="#plus"/></svg>
<div class="t" style="left:1656.50px;top:348.29px;font-size:13px;color:#00a693;font-weight:700;">Manage Apps</div>
<svg class="i" style="left:1780.00px;top:346.20px;width:6.00px;height:16.60px;" viewBox="0 0 6 16.6"><circle cx="3" cy="3.00" r="1.3" fill="#4f6b88"/><circle cx="3" cy="8.30" r="1.3" fill="#4f6b88"/><circle cx="3" cy="13.60" r="1.3" fill="#4f6b88"/></svg>
<div class="r" style="left:189.00px;top:427.00px;width:1612.00px;height:1.00px;background:#d8e2ee"></div>
<div class="r" style="left:189.00px;top:425.80px;width:156.00px;height:2.60px;background:#00a693"></div>
<div class="t" style="left:207.60px;top:398.19px;font-size:13px;color:#00a693;font-weight:700;">Product Dashboard</div>
<div class="t" style="left:395.40px;top:398.19px;font-size:13px;color:#15304f;font-weight:700;">Releases</div>
<div class="t" style="left:519.00px;top:398.19px;font-size:13px;color:#15304f;font-weight:700;">Settings</div>
<div class="t" style="left:189.50px;top:450.54px;font-size:12px;color:#5b7590;">Search</div>
<div class="t" style="left:426.50px;top:450.54px;font-size:12px;color:#5b7590;">Image Name</div>
<div class="t" style="left:662.60px;top:450.54px;font-size:12px;color:#5b7590;">Committer</div>
<div class="t" style="left:899.00px;top:450.54px;font-size:12px;color:#5b7590;">Jira Ticket</div>
<div class="r" style="left:189.00px;top:466.40px;width:229.00px;height:27.30px;background:#eef2fb;border:1px solid #c6d4e3;border-radius:4px"></div>
<div class="t" style="left:197.40px;top:473.15px;font-size:14px;color:#93a5ba;">Search</div>
<div class="r" style="left:426.00px;top:466.40px;width:228.00px;height:27.30px;background:#eef2fb;border:1px solid #c6d4e3;border-radius:4px"></div>
<div class="t" style="left:434.40px;top:473.15px;font-size:14px;color:#93a5ba;">Select</div>
<div class="r" style="left:662.00px;top:466.40px;width:229.00px;height:27.30px;background:#eef2fb;border:1px solid #c6d4e3;border-radius:4px"></div>
<div class="t" style="left:670.40px;top:473.15px;font-size:14px;color:#93a5ba;">Select</div>
<div class="r" style="left:899.00px;top:466.40px;width:229.00px;height:27.30px;background:#eef2fb;border:1px solid #c6d4e3;border-radius:4px"></div>
<div class="t" style="left:907.40px;top:473.15px;font-size:14px;color:#93a5ba;">Select</div>
<div class="r" style="left:1609.00px;top:466.30px;width:34.00px;height:27.20px;background:#dfe8f5;border:1px solid #cdd9e7;border-radius:4px"></div>
<svg class="i" style="left:1617.80px;top:471.00px;width:17.20px;height:17.20px;color:#4f6b88;"><use href="#star"/></svg>
<div class="r" style="left:1651.00px;top:466.30px;width:150.00px;height:27.20px;background:#dde7f4;border:1px solid #cdd9e7;border-radius:4px"></div>
<div class="r" style="left:1651.00px;top:466.30px;width:47.00px;height:27.20px;background:#00a693;border-radius:4px 0 0 4px"></div>
<div class="r" style="left:1731.00px;top:467.00px;width:1.00px;height:26.00px;background:#c9d6e5"></div>
<div class="t" style="left:1659.60px;top:473.45px;font-size:14px;color:#fff;">Pods</div>
<div class="t" style="left:1705.50px;top:473.45px;font-size:14px;color:#15263b;">Git</div>
<div class="t" style="left:1738.50px;top:473.45px;font-size:14px;color:#15263b;">Features</div>
<div class="clip" style="left:180px;top:500px;width:1621px;height:479px"><div class="in" style="left:-180px;top:-500px">
<div class="r" style="left:189.00px;top:546.00px;width:416.00px;height:440.00px;background:#eef2fa"></div>
<div class="r" style="left:605.00px;top:546.00px;width:16.00px;height:440.00px;background-image:linear-gradient(to bottom,#f3f4fb 0px,rgba(243,244,251,0) 36px),linear-gradient(to right,#eef1f9,#e6e9f3 45%,#e6e9f3 60%,#eef1f9)"></div>
<div class="r" style="left:621.00px;top:546.00px;width:416.00px;height:440.00px;background:#eef2fa"></div>
<div class="r" style="left:1037.00px;top:546.00px;width:16.00px;height:440.00px;background-image:linear-gradient(to bottom,#f3f4fb 0px,rgba(243,244,251,0) 36px),linear-gradient(to right,#eef1f9,#e6e9f3 45%,#e6e9f3 60%,#eef1f9)"></div>
<div class="r" style="left:1053.00px;top:546.00px;width:416.00px;height:440.00px;background:#eef2fa"></div>
<div class="r" style="left:1469.00px;top:546.00px;width:16.00px;height:440.00px;background-image:linear-gradient(to bottom,#f3f4fb 0px,rgba(243,244,251,0) 36px),linear-gradient(to right,#eef1f9,#e6e9f3 45%,#e6e9f3 60%,#eef1f9)"></div>
<div class="r" style="left:1485.00px;top:546.00px;width:416.00px;height:440.00px;background:#eef2fa"></div>
<div class="r" style="left:1901.00px;top:546.00px;width:16.00px;height:440.00px;background-image:linear-gradient(to bottom,#f3f4fb 0px,rgba(243,244,251,0) 36px),linear-gradient(to right,#eef1f9,#e6e9f3 45%,#e6e9f3 60%,#eef1f9)"></div>
<svg class="i" style="left:189.00px;top:510.00px;width:416.00px;height:36.00px;" viewBox="0 0 416 36"><polygon points="0.0,0.0 398.0,0.0 416.0,18.0 398.0,36.0 0.0,36.0" fill="#67829b"/></svg>
<svg class="i" style="left:206.00px;top:522.00px;width:15.00px;height:12.00px;color:#c6def5;"><use href="#cloud"/></svg>
<div class="t" style="left:229.00px;top:521.30px;font-size:15px;color:#fff;font-weight:700;">dev</div>
<div class="t m" style="left:259.35px;top:523.07px;font-size:14px;color:#d3e5f8;-webkit-text-stroke-width:0.2px;transform:scaleX(0.836);transform-origin:0 0;">(non-production)</div>
<div class="r" style="left:205.00px;top:562.00px;width:384.00px;height:414.00px;background:#fff;border:1px solid #cfdbe8;border-left:4px solid #48ae70"></div>
<svg class="i" style="left:221.00px;top:575.00px;width:32.00px;height:32.00px;"><use href="#heartc"/></svg>
<svg class="i" style="left:262.20px;top:581.30px;width:15.50px;height:15.50px;color:#48ae70;"><use href="#sync"/></svg>
<div class="t" style="left:284.50px;top:582.99px;font-size:13px;color:#1f74d4;font-weight:700;">trioapp-dev</div>
<svg class="i" style="left:516.00px;top:580.60px;width:6.00px;height:14.80px;" viewBox="0 0 6 14.8"><circle cx="3" cy="3.00" r="1.05" fill="#2d4159"/><circle cx="3" cy="7.40" r="1.05" fill="#2d4159"/><circle cx="3" cy="11.80" r="1.05" fill="#2d4159"/></svg>
<div class="r" style="left:548.00px;top:575.40px;width:28.00px;height:27.60px;background:#fff;border:1.5px solid #6d87a1;border-radius:4px"></div>
<svg class="i" style="left:553.60px;top:580.20px;width:16.80px;height:16.80px;color:#a0b0c8;"><use href="#star"/></svg>
<div class="r" style="left:261.20px;top:607.40px;width:62.40px;height:21.20px;background:#eaf1fc;border:1px solid #a9c4ee;border-radius:4px"></div>
<div class="t" style="left:92.40px;width:400px;text-align:center;top:611.67px;font-size:13px;color:#0f2137;">v1.170.7</div>
<div class="r" style="left:209.00px;top:641.00px;width:380.00px;height:1.00px;background:#cfdbe8"></div>
<div class="t" style="left:217.60px;top:654.99px;font-size:13px;color:#0f2a4a;font-weight:700;">Deployments</div>
<div class="t" style="left:217.60px;top:688.15px;font-size:14px;color:#7b8fa6;">No items to display</div>
<div class="t" style="left:217.60px;top:714.99px;font-size:13px;color:#0f2a4a;font-weight:700;">Rollouts</div>
<svg class="i" style="left:277.00px;top:710px;width:18px;height:18px" viewBox="0 0 18 18"><circle cx="9" cy="9" r="9" fill="#cbd7e6"/></svg>
<div class="t" style="left:86.00px;width:400px;text-align:center;top:713.61px;font-size:10.5px;color:#2f4763;font-weight:700;">1</div>
<div class="r" style="left:217.00px;top:740.00px;width:363.00px;height:92.50px;background:#ebf1fb;border:1px solid #c9d6e6"></div>
<svg class="i" style="left:235.00px;top:752.00px;width:18.00px;height:18.00px;color:#48ae70;"><use href="#checko"/></svg>
<div class="t" style="left:258.40px;top:754.99px;font-size:13px;color:#1f74d4;font-weight:700;">trioapp-dev-buslog</div>
<div class="r" style="left:468.00px;top:750.80px;width:32.00px;height:19.20px;background:#00a693;border-radius:10px"></div>
<div class="t" style="left:284.00px;width:400px;text-align:center;top:754.99px;font-size:11px;color:#fff;font-weight:700;">2/2</div>
<div class="r" style="left:504.00px;top:750.00px;width:59.00px;height:21.00px;background:#e2f3e5;border:1px solid #c6e5cc;border-radius:3px"></div>
<div class="t" style="left:512.00px;top:755.14px;font-size:12px;color:#55b37c;letter-spacing:1.0px;">canary</div>
<svg class="i" style="left:240.00px;top:779.00px;width:8.00px;height:43.00px;" viewBox="0 0 8 43"><path d="M3.5 1 V41 M0.6 38 L3.5 41 L6.4 38" fill="none" stroke="#6d8299" stroke-width="1"/></svg>
<svg class="i" style="left:256.00px;top:785.00px;width:10.00px;height:12.00px;color:#6d8299;"><use href="#img"/></svg>
<svg class="i" style="left:256.00px;top:807.00px;width:10.00px;height:12.00px;color:#6d8299;"><use href="#img"/></svg>
<div class="t" style="left:273.50px;top:783.92px;font-size:14.5px;color:#3f7fe0;">docker.io/aperturesci/buslog:main-7a7970c</div>
<div class="t" style="left:273.50px;top:805.32px;font-size:14.5px;color:#48ae70;">docker.io/aperturesci/buslog:main-fbc4bab</div>
<div class="r" style="left:217.00px;top:849.00px;width:363.00px;height:74.00px;background:#f6f8fd;border:1px solid #cfdbe8"></div>
<div class="t" style="left:230.20px;top:861.64px;font-size:14.6px;color:#1e3550;">[promotion:trio-flow] Merge branch main</div>
<div class="t" style="left:230.20px;top:887.65px;font-size:14px;color:#6b7f95;">by</div>
<svg class="i" style="left:249.50px;top:885.00px;width:20.00px;height:20.00px;"><use href="#avatar"/></svg>
<div class="t" style="left:277.80px;top:887.65px;font-size:14px;color:#15263b;letter-spacing:-0.15px;">todaywasawesome</div>
<svg class="i" style="left:399.60px;top:893.8px;width:2px;height:2px" viewBox="0 0 2 2"><circle cx="1" cy="1" r="1" fill="#b5c2d2"/></svg>
<div class="r" style="left:209.00px;top:935.00px;width:380.00px;height:1.00px;background:#cfdbe8"></div>
<div class="t" style="left:221.40px;top:946.44px;font-size:12px;color:#6b7f95;">Cluster:</div>
<div class="t" style="left:267.70px;top:946.44px;font-size:12px;color:#2a3f58;font-weight:700;">kc-v-dev</div>
<div class="r" style="left:398.00px;top:950.00px;width:1.00px;height:12.00px;background:#cfdbe8"></div>
<svg class="i" style="left:621.00px;top:510.00px;width:416.00px;height:36.00px;" viewBox="0 0 416 36"><polygon points="0.0,0.0 398.0,0.0 416.0,18.0 398.0,36.0 0.0,36.0 17.5,18.0" fill="#67829b"/></svg>
<svg class="i" style="left:656.00px;top:522.00px;width:15.00px;height:12.00px;color:#c6def5;"><use href="#cloud"/></svg>
<div class="t" style="left:679.00px;top:521.30px;font-size:15px;color:#fff;font-weight:700;">qa</div>
<div class="t m" style="left:701.00px;top:523.07px;font-size:14px;color:#d3e5f8;-webkit-text-stroke-width:0.2px;transform:scaleX(0.836);transform-origin:0 0;">(non-production)</div>
<div class="r" style="left:637.00px;top:562.00px;width:384.00px;height:414.00px;background:#fff;border:1px solid #cfdbe8;border-left:4px solid #48ae70"></div>
<svg class="i" style="left:653.00px;top:575.00px;width:32.00px;height:32.00px;"><use href="#heartc"/></svg>
<svg class="i" style="left:694.20px;top:581.30px;width:15.50px;height:15.50px;color:#48ae70;"><use href="#sync"/></svg>
<div class="t" style="left:716.50px;top:582.99px;font-size:13px;color:#1f74d4;font-weight:700;">trioapp-qa</div>
<svg class="i" style="left:948.00px;top:580.60px;width:6.00px;height:14.80px;" viewBox="0 0 6 14.8"><circle cx="3" cy="3.00" r="1.05" fill="#2d4159"/><circle cx="3" cy="7.40" r="1.05" fill="#2d4159"/><circle cx="3" cy="11.80" r="1.05" fill="#2d4159"/></svg>
<div class="r" style="left:980.00px;top:575.40px;width:28.00px;height:27.60px;background:#fff;border:1.5px solid #6d87a1;border-radius:4px"></div>
<svg class="i" style="left:985.60px;top:580.20px;width:16.80px;height:16.80px;color:#a0b0c8;"><use href="#star"/></svg>
<div class="r" style="left:693.20px;top:607.40px;width:62.40px;height:21.20px;background:#eaf1fc;border:1px solid #a9c4ee;border-radius:4px"></div>
<div class="t" style="left:524.40px;width:400px;text-align:center;top:611.67px;font-size:13px;color:#0f2137;">v1.170.7</div>
<div class="r" style="left:641.00px;top:641.00px;width:380.00px;height:1.00px;background:#cfdbe8"></div>
<div class="t" style="left:649.60px;top:654.99px;font-size:13px;color:#0f2a4a;font-weight:700;">Deployments</div>
<div class="t" style="left:649.60px;top:688.15px;font-size:14px;color:#7b8fa6;">No items to display</div>
<div class="t" style="left:649.60px;top:714.99px;font-size:13px;color:#0f2a4a;font-weight:700;">Rollouts</div>
<svg class="i" style="left:709.00px;top:710px;width:18px;height:18px" viewBox="0 0 18 18"><circle cx="9" cy="9" r="9" fill="#cbd7e6"/></svg>
<div class="t" style="left:518.00px;width:400px;text-align:center;top:713.61px;font-size:10.5px;color:#2f4763;font-weight:700;">1</div>
<div class="r" style="left:649.00px;top:740.00px;width:363.00px;height:92.50px;background:#ebf1fb;border:1px solid #c9d6e6"></div>
<svg class="i" style="left:667.00px;top:752.00px;width:18.00px;height:18.00px;color:#48ae70;"><use href="#checko"/></svg>
<div class="t" style="left:690.40px;top:754.99px;font-size:13px;color:#1f74d4;font-weight:700;">trioapp-qa-buslog</div>
<div class="r" style="left:900.00px;top:750.80px;width:32.00px;height:19.20px;background:#00a693;border-radius:10px"></div>
<div class="t" style="left:716.00px;width:400px;text-align:center;top:754.99px;font-size:11px;color:#fff;font-weight:700;">3/3</div>
<div class="r" style="left:936.00px;top:750.00px;width:59.00px;height:21.00px;background:#e2f3e5;border:1px solid #c6e5cc;border-radius:3px"></div>
<div class="t" style="left:944.00px;top:755.14px;font-size:12px;color:#55b37c;letter-spacing:1.0px;">canary</div>
<svg class="i" style="left:672.00px;top:779.00px;width:8.00px;height:43.00px;" viewBox="0 0 8 43"><path d="M3.5 1 V41 M0.6 38 L3.5 41 L6.4 38" fill="none" stroke="#6d8299" stroke-width="1"/></svg>
<svg class="i" style="left:688.00px;top:785.00px;width:10.00px;height:12.00px;color:#6d8299;"><use href="#img"/></svg>
<svg class="i" style="left:688.00px;top:807.00px;width:10.00px;height:12.00px;color:#6d8299;"><use href="#img"/></svg>
<div class="t" style="left:705.50px;top:783.92px;font-size:14.5px;color:#3f7fe0;">docker.io/aperturesci/buslog:main-7a7970c</div>
<div class="t" style="left:705.50px;top:805.32px;font-size:14.5px;color:#48ae70;">docker.io/aperturesci/buslog:main-fbc4bab</div>
<div class="r" style="left:649.00px;top:849.00px;width:363.00px;height:74.00px;background:#f6f8fd;border:1px solid #cfdbe8"></div>
<div class="t" style="left:662.20px;top:861.64px;font-size:14.6px;color:#1e3550;">[promotion:trio-flow] Merge branch main</div>
<div class="t" style="left:662.20px;top:887.65px;font-size:14px;color:#6b7f95;">by</div>
<svg class="i" style="left:681.50px;top:885.00px;width:20.00px;height:20.00px;"><use href="#avatar"/></svg>
<div class="t" style="left:709.80px;top:887.65px;font-size:14px;color:#15263b;letter-spacing:-0.15px;">todaywasawesome</div>
<svg class="i" style="left:831.60px;top:893.8px;width:2px;height:2px" viewBox="0 0 2 2"><circle cx="1" cy="1" r="1" fill="#b5c2d2"/></svg>
<div class="r" style="left:641.00px;top:935.00px;width:380.00px;height:1.00px;background:#cfdbe8"></div>
<div class="t" style="left:653.40px;top:946.44px;font-size:12px;color:#6b7f95;">Cluster:</div>
<div class="t" style="left:699.70px;top:946.44px;font-size:12px;color:#2a3f58;font-weight:700;">kc-v-qa</div>
<div class="r" style="left:830.00px;top:950.00px;width:1.00px;height:12.00px;background:#cfdbe8"></div>
<svg class="i" style="left:1053.00px;top:510.00px;width:416.00px;height:36.00px;" viewBox="0 0 416 36"><polygon points="0.0,0.0 398.0,0.0 416.0,18.0 398.0,36.0 0.0,36.0 17.5,18.0" fill="#67829b"/></svg>
<svg class="i" style="left:1088.00px;top:522.00px;width:15.00px;height:12.00px;color:#c6def5;"><use href="#cloud"/></svg>
<div class="t" style="left:1111.00px;top:521.30px;font-size:15px;color:#fff;font-weight:700;">staging</div>
<div class="t m" style="left:1168.83px;top:523.07px;font-size:14px;color:#d3e5f8;-webkit-text-stroke-width:0.2px;transform:scaleX(0.836);transform-origin:0 0;">(non-production)</div>
<div class="r" style="left:1069.00px;top:562.00px;width:384.00px;height:414.00px;background:#fff;border:1px solid #cfdbe8;border-left:4px solid #48ae70"></div>
<svg class="i" style="left:1085.00px;top:575.00px;width:32.00px;height:32.00px;"><use href="#heartc"/></svg>
<svg class="i" style="left:1126.20px;top:581.30px;width:15.50px;height:15.50px;color:#48ae70;"><use href="#sync"/></svg>
<div class="t" style="left:1148.50px;top:582.99px;font-size:13px;color:#1f74d4;font-weight:700;">trioapp-staging</div>
<svg class="i" style="left:1380.00px;top:580.60px;width:6.00px;height:14.80px;" viewBox="0 0 6 14.8"><circle cx="3" cy="3.00" r="1.05" fill="#2d4159"/><circle cx="3" cy="7.40" r="1.05" fill="#2d4159"/><circle cx="3" cy="11.80" r="1.05" fill="#2d4159"/></svg>
<div class="r" style="left:1412.00px;top:575.40px;width:28.00px;height:27.60px;background:#fff;border:1.5px solid #6d87a1;border-radius:4px"></div>
<svg class="i" style="left:1417.60px;top:580.20px;width:16.80px;height:16.80px;color:#a0b0c8;"><use href="#star"/></svg>
<div class="r" style="left:1125.20px;top:607.40px;width:62.40px;height:21.20px;background:#eaf1fc;border:1px solid #a9c4ee;border-radius:4px"></div>
<div class="t" style="left:956.40px;width:400px;text-align:center;top:611.67px;font-size:13px;color:#0f2137;">v1.170.7</div>
<div class="r" style="left:1073.00px;top:641.00px;width:380.00px;height:1.00px;background:#cfdbe8"></div>
<div class="t" style="left:1081.60px;top:654.99px;font-size:13px;color:#0f2a4a;font-weight:700;">Deployments</div>
<div class="t" style="left:1081.60px;top:688.15px;font-size:14px;color:#7b8fa6;">No items to display</div>
<div class="t" style="left:1081.60px;top:714.99px;font-size:13px;color:#0f2a4a;font-weight:700;">Rollouts</div>
<svg class="i" style="left:1141.00px;top:710px;width:18px;height:18px" viewBox="0 0 18 18"><circle cx="9" cy="9" r="9" fill="#cbd7e6"/></svg>
<div class="t" style="left:950.00px;width:400px;text-align:center;top:713.61px;font-size:10.5px;color:#2f4763;font-weight:700;">1</div>
<div class="r" style="left:1081.00px;top:740.00px;width:363.00px;height:92.50px;background:#ebf1fb;border:1px solid #c9d6e6"></div>
<svg class="i" style="left:1099.00px;top:752.00px;width:18.00px;height:18.00px;color:#48ae70;"><use href="#checko"/></svg>
<div class="t" style="left:1122.40px;top:754.99px;font-size:13px;color:#1f74d4;font-weight:700;">trioapp-staging-buslog</div>
<div class="r" style="left:1332.00px;top:750.80px;width:32.00px;height:19.20px;background:#00a693;border-radius:10px"></div>
<div class="t" style="left:1148.00px;width:400px;text-align:center;top:754.99px;font-size:11px;color:#fff;font-weight:700;">3/3</div>
<div class="r" style="left:1368.00px;top:750.00px;width:59.00px;height:21.00px;background:#e2f3e5;border:1px solid #c6e5cc;border-radius:3px"></div>
<div class="t" style="left:1376.00px;top:755.14px;font-size:12px;color:#55b37c;letter-spacing:1.0px;">canary</div>
<svg class="i" style="left:1104.00px;top:779.00px;width:8.00px;height:43.00px;" viewBox="0 0 8 43"><path d="M3.5 1 V41 M0.6 38 L3.5 41 L6.4 38" fill="none" stroke="#6d8299" stroke-width="1"/></svg>
<svg class="i" style="left:1120.00px;top:785.00px;width:10.00px;height:12.00px;color:#6d8299;"><use href="#img"/></svg>
<svg class="i" style="left:1120.00px;top:807.00px;width:10.00px;height:12.00px;color:#6d8299;"><use href="#img"/></svg>
<div class="t" style="left:1137.50px;top:783.92px;font-size:14.5px;color:#3f7fe0;">docker.io/aperturesci/buslog:main-7a7970c</div>
<div class="t" style="left:1137.50px;top:805.32px;font-size:14.5px;color:#48ae70;">docker.io/aperturesci/buslog:main-fbc4bab</div>
<div class="r" style="left:1081.00px;top:849.00px;width:363.00px;height:74.00px;background:#f6f8fd;border:1px solid #cfdbe8"></div>
<div class="t" style="left:1094.20px;top:861.64px;font-size:14.6px;color:#1e3550;">[promotion:trio-flow] Merge branch main</div>
<div class="t" style="left:1094.20px;top:887.65px;font-size:14px;color:#6b7f95;">by</div>
<svg class="i" style="left:1113.50px;top:885.00px;width:20.00px;height:20.00px;"><use href="#avatar"/></svg>
<div class="t" style="left:1141.80px;top:887.65px;font-size:14px;color:#15263b;letter-spacing:-0.15px;">todaywasawesome</div>
<svg class="i" style="left:1263.60px;top:893.8px;width:2px;height:2px" viewBox="0 0 2 2"><circle cx="1" cy="1" r="1" fill="#b5c2d2"/></svg>
<div class="r" style="left:1073.00px;top:935.00px;width:380.00px;height:1.00px;background:#cfdbe8"></div>
<div class="t" style="left:1085.40px;top:946.44px;font-size:12px;color:#6b7f95;">Cluster:</div>
<div class="t" style="left:1131.70px;top:946.44px;font-size:12px;color:#2a3f58;font-weight:700;">kc-v-staging</div>
<div class="r" style="left:1262.00px;top:950.00px;width:1.00px;height:12.00px;background:#cfdbe8"></div>
<svg class="i" style="left:1485.00px;top:510.00px;width:416.00px;height:36.00px;" viewBox="0 0 416 36"><polygon points="0.0,0.0 398.0,0.0 416.0,18.0 398.0,36.0 0.0,36.0 17.5,18.0" fill="#3f7be0"/></svg>
<svg class="i" style="left:1520.00px;top:522.00px;width:15.00px;height:12.00px;color:#c6def5;"><use href="#cloud"/></svg>
<div class="t" style="left:1543.00px;top:521.30px;font-size:15px;color:#fff;font-weight:700;">production</div>
<div class="t m" style="left:1625.82px;top:523.07px;font-size:14px;color:#d3e5f8;-webkit-text-stroke-width:0.2px;transform:scaleX(0.836);transform-origin:0 0;">(production)</div>
<div class="r" style="left:1501.00px;top:562.00px;width:384.00px;height:414.00px;background:#fff;border:1px solid #cfdbe8;border-left:4px solid #48ae70"></div>
<svg class="i" style="left:1517.00px;top:575.00px;width:32.00px;height:32.00px;"><use href="#heartc"/></svg>
<svg class="i" style="left:1558.20px;top:581.30px;width:15.50px;height:15.50px;color:#48ae70;"><use href="#sync"/></svg>
<div class="t" style="left:1580.50px;top:582.99px;font-size:13px;color:#1f74d4;font-weight:700;">trioapp-prod-asia</div>
<svg class="i" style="left:1812.00px;top:580.60px;width:6.00px;height:14.80px;" viewBox="0 0 6 14.8"><circle cx="3" cy="3.00" r="1.05" fill="#2d4159"/><circle cx="3" cy="7.40" r="1.05" fill="#2d4159"/><circle cx="3" cy="11.80" r="1.05" fill="#2d4159"/></svg>
<div class="r" style="left:1844.00px;top:575.40px;width:28.00px;height:27.60px;background:#fff;border:1.5px solid #6d87a1;border-radius:4px"></div>
<svg class="i" style="left:1849.60px;top:580.20px;width:16.80px;height:16.80px;color:#a0b0c8;"><use href="#star"/></svg>
<div class="r" style="left:1557.20px;top:607.40px;width:62.40px;height:21.20px;background:#eaf1fc;border:1px solid #a9c4ee;border-radius:4px"></div>
<div class="t" style="left:1388.40px;width:400px;text-align:center;top:611.67px;font-size:13px;color:#0f2137;">v1.170.7</div>
<div class="r" style="left:1505.00px;top:641.00px;width:380.00px;height:1.00px;background:#cfdbe8"></div>
<div class="t" style="left:1513.60px;top:654.99px;font-size:13px;color:#0f2a4a;font-weight:700;">Deployments</div>
<div class="t" style="left:1513.60px;top:688.15px;font-size:14px;color:#7b8fa6;">No items to display</div>
<div class="t" style="left:1513.60px;top:714.99px;font-size:13px;color:#0f2a4a;font-weight:700;">Rollouts</div>
<svg class="i" style="left:1573.00px;top:710px;width:18px;height:18px" viewBox="0 0 18 18"><circle cx="9" cy="9" r="9" fill="#cbd7e6"/></svg>
<div class="t" style="left:1382.00px;width:400px;text-align:center;top:713.61px;font-size:10.5px;color:#2f4763;font-weight:700;">1</div>
<div class="r" style="left:1513.00px;top:740.00px;width:363.00px;height:92.50px;background:#ebf1fb;border:1px solid #c9d6e6"></div>
<svg class="i" style="left:1531.00px;top:752.00px;width:18.00px;height:18.00px;color:#48ae70;"><use href="#checko"/></svg>
<div class="t" style="left:1554.40px;top:754.99px;font-size:13px;color:#1f74d4;font-weight:700;">trioapp-prod-asia-buslog</div>
<div class="r" style="left:1764.00px;top:750.80px;width:32.00px;height:19.20px;background:#00a693;border-radius:10px"></div>
<div class="t" style="left:1580.00px;width:400px;text-align:center;top:754.99px;font-size:11px;color:#fff;font-weight:700;">3/3</div>
<div class="r" style="left:1800.00px;top:750.00px;width:59.00px;height:21.00px;background:#e2f3e5;border:1px solid #c6e5cc;border-radius:3px"></div>
<div class="t" style="left:1808.00px;top:755.14px;font-size:12px;color:#55b37c;letter-spacing:1.0px;">canary</div>
<svg class="i" style="left:1536.00px;top:779.00px;width:8.00px;height:43.00px;" viewBox="0 0 8 43"><path d="M3.5 1 V41 M0.6 38 L3.5 41 L6.4 38" fill="none" stroke="#6d8299" stroke-width="1"/></svg>
<svg class="i" style="left:1552.00px;top:785.00px;width:10.00px;height:12.00px;color:#6d8299;"><use href="#img"/></svg>
<svg class="i" style="left:1552.00px;top:807.00px;width:10.00px;height:12.00px;color:#6d8299;"><use href="#img"/></svg>
<div class="t" style="left:1569.50px;top:783.92px;font-size:14.5px;color:#3f7fe0;">docker.io/aperturesci/buslog:main-7a7970c</div>
<div class="t" style="left:1569.50px;top:805.32px;font-size:14.5px;color:#48ae70;">docker.io/aperturesci/buslog:main-fbc4bab</div>
<div class="r" style="left:1513.00px;top:849.00px;width:363.00px;height:74.00px;background:#f6f8fd;border:1px solid #cfdbe8"></div>
<div class="t" style="left:1526.20px;top:861.64px;font-size:14.6px;color:#1e3550;">[promotion:trio-flow] Merge branch main</div>
<div class="t" style="left:1526.20px;top:887.65px;font-size:14px;color:#6b7f95;">by</div>
<svg class="i" style="left:1545.50px;top:885.00px;width:20.00px;height:20.00px;"><use href="#avatar"/></svg>
<div class="t" style="left:1573.80px;top:887.65px;font-size:14px;color:#15263b;letter-spacing:-0.15px;">todaywasawesome</div>
<svg class="i" style="left:1695.60px;top:893.8px;width:2px;height:2px" viewBox="0 0 2 2"><circle cx="1" cy="1" r="1" fill="#b5c2d2"/></svg>
<div class="r" style="left:1505.00px;top:935.00px;width:380.00px;height:1.00px;background:#cfdbe8"></div>
<div class="t" style="left:1517.40px;top:946.44px;font-size:12px;color:#6b7f95;">Cluster:</div>
<div class="t" style="left:1563.70px;top:946.44px;font-size:12px;color:#2a3f58;font-weight:700;">kc-v-prod</div>
<div class="r" style="left:1694.00px;top:950.00px;width:1.00px;height:12.00px;background:#cfdbe8"></div>
</div></div>
</div></div>
<div class="p" style="left:403px;top:839px;width:1639px;height:481px;"><div class="in" style="left:-404px;top:-840px">
<div class="r" style="left:0.00px;top:0.00px;width:2056.00px;height:1334.00px;background:#f5f6fd"></div>
<svg class="i" style="left:416.00px;top:853.50px;width:14.00px;height:14.00px;color:#5b7590;"><use href="#home"/></svg>
<div class="t" style="left:435.60px;top:854.15px;font-size:14px;color:#5b7590;">Home</div>
<div class="t" style="left:495.70px;top:854.15px;font-size:14px;color:#5b7590;">Products</div>
<div class="t" style="left:576.00px;top:854.15px;font-size:14px;color:#15263b;">trio</div>
<svg class="i" style="left:480.70px;top:858.80px;width:5.50px;height:7.60px;color:#8599ad;"><use href="#sep"/></svg>
<svg class="i" style="left:561.70px;top:858.80px;width:5.50px;height:7.60px;color:#8599ad;"><use href="#sep"/></svg>
<div class="r" style="left:415.00px;top:934.00px;width:1612.00px;height:1.00px;background:#d8e2ee"></div>
<div class="r" style="left:603.00px;top:932.60px;width:92.00px;height:2.60px;background:#00a693"></div>
<div class="t" style="left:433.60px;top:904.99px;font-size:13px;color:#15304f;font-weight:700;">Product Dashboard</div>
<div class="t" style="left:621.20px;top:904.99px;font-size:13px;color:#00a693;font-weight:700;">Releases</div>
<div class="t" style="left:745.20px;top:904.99px;font-size:13px;color:#15304f;font-weight:700;">Settings</div>
<div class="t" style="left:415.40px;top:956.64px;font-size:12px;color:#5b7590;">Start Date</div>
<div class="t" style="left:952.30px;top:956.64px;font-size:12px;color:#5b7590;">Status</div>
<div class="t" style="left:1221.00px;top:956.64px;font-size:12px;color:#5b7590;">Promotion Flow</div>
<div class="r" style="left:415.00px;top:973.10px;width:529.00px;height:27.50px;background:#eef2fb;border:1px solid #c6d4e3;border-radius:4px"></div>
<div class="t" style="left:423.30px;top:980.15px;font-size:14px;color:#93a5ba;">Start date</div>
<svg class="i" style="left:664.00px;top:983.00px;width:14.00px;height:8.00px;" viewBox="0 0 14 8"><path d="M0.5 4.5 H12.5 M9.5 2 L12.5 4.5" fill="none" stroke="#93a5ba" stroke-width="1"/></svg>
<div class="t" style="left:687.00px;top:980.15px;font-size:14px;color:#93a5ba;">End date</div>
<svg class="i" style="left:922.00px;top:980.00px;width:13.50px;height:13.50px;color:#93a5ba;"><use href="#cal"/></svg>
<div class="r" style="left:952.00px;top:973.10px;width:261.00px;height:27.50px;background:#eef2fb;border:1px solid #c6d4e3;border-radius:4px"></div>
<div class="t" style="left:960.40px;top:980.15px;font-size:14px;color:#93a5ba;">Select</div>
<div class="r" style="left:1221.00px;top:973.10px;width:261.00px;height:27.50px;background:#eef2fb;border:1px solid #c6d4e3;border-radius:4px"></div>
<div class="t" style="left:1229.40px;top:980.15px;font-size:14px;color:#93a5ba;">Select</div>
<div class="r" style="left:1786.00px;top:1017.00px;width:205.00px;height:54.50px;background:linear-gradient(to right,#edf1fb,#f0f3fc 60%,#f3f5fc)"></div>
<div class="r" style="left:415.00px;top:1017.00px;width:1361.00px;height:55.00px;background:#dde8f6;border-radius:7px 7px 0 0"></div>
<div class="r" style="left:544.60px;top:1033.00px;width:1.00px;height:23.00px;background:#c5d4e6"></div>
<div class="r" style="left:815.40px;top:1033.00px;width:1.00px;height:23.00px;background:#c5d4e6"></div>
<div class="r" style="left:975.40px;top:1033.00px;width:1.00px;height:23.00px;background:#c5d4e6"></div>
<div class="r" style="left:1135.50px;top:1033.00px;width:1.00px;height:23.00px;background:#c5d4e6"></div>
<div class="r" style="left:1295.10px;top:1033.00px;width:1.00px;height:23.00px;background:#c5d4e6"></div>
<div class="r" style="left:1455.40px;top:1033.00px;width:1.00px;height:23.00px;background:#c5d4e6"></div>
<div class="r" style="left:1615.40px;top:1033.00px;width:1.00px;height:23.00px;background:#c5d4e6"></div>
<div class="t" style="left:431.20px;top:1038.19px;font-size:13px;color:#0f2137;font-weight:700;">Release ID</div>
<div class="t" style="left:561.60px;top:1038.19px;font-size:13px;color:#0f2137;font-weight:700;letter-spacing:0.2px;">Initiator</div>
<div class="t" style="left:832.40px;top:1038.19px;font-size:13px;color:#0f2137;font-weight:700;">Date of Creation</div>
<div class="t" style="left:992.00px;top:1038.19px;font-size:13px;color:#0f2137;font-weight:700;">Promotion Flow</div>
<div class="t" style="left:1016.00px;width:400px;text-align:center;top:1038.19px;font-size:13px;color:#0f2137;font-weight:700;">dev</div>
<div class="t" style="left:1176.00px;width:400px;text-align:center;top:1038.19px;font-size:13px;color:#0f2137;font-weight:700;">qa</div>
<div class="t" style="left:1336.00px;width:400px;text-align:center;top:1038.19px;font-size:13px;color:#0f2137;font-weight:700;">staging</div>
<div class="t" style="left:1496.00px;width:400px;text-align:center;top:1038.19px;font-size:13px;color:#0f2137;font-weight:700;">production</div>
<div class="r" style="left:415.00px;top:1072.00px;width:1361.00px;height:59.00px;background:#fff"></div>
<div class="r" style="left:415.00px;top:1131.00px;width:1361.00px;height:1.00px;background:#dbe5f2"></div>
<div class="t" style="left:431.00px;top:1096.05px;font-size:13.4px;color:#1f74d4;font-weight:700;">57f7ed82d</div>
<svg class="i" style="left:561.00px;top:1089.80px;width:24.00px;height:24.00px;"><use href="#avatar"/></svg>
<div class="t" style="left:589.80px;top:1093.25px;font-size:14px;color:#15263b;letter-spacing:-0.15px;">todaywasawesome</div>
<div class="t" style="left:832.40px;top:1095.24px;font-size:12px;color:#6b8099;">04-Nov-24, 14:48</div>
<div class="t" style="left:992.00px;top:1096.18px;font-size:13.6px;color:#1f74d4;font-weight:700;">trio-flow</div>
<svg class="i" style="left:1205.50px;top:1089.80px;width:21.00px;height:21.00px;"><use href="#okc"/></svg>
<svg class="i" style="left:1365.50px;top:1089.80px;width:21.00px;height:21.00px;"><use href="#okc"/></svg>
<svg class="i" style="left:1525.50px;top:1089.80px;width:21.00px;height:21.00px;"><use href="#okc"/></svg>
<svg class="i" style="left:1685.50px;top:1089.80px;width:21.00px;height:21.00px;"><use href="#okc"/></svg>
<div class="r" style="left:415.00px;top:1132.00px;width:1361.00px;height:55.00px;background:#f5f6fd"></div>
<div class="r" style="left:415.00px;top:1187.00px;width:1361.00px;height:1.00px;background:#dbe5f2"></div>
<div class="t" style="left:431.00px;top:1156.05px;font-size:13.4px;color:#1f74d4;font-weight:700;">4993874db</div>
<svg class="i" style="left:561.00px;top:1149.80px;width:24.00px;height:24.00px;"><use href="#avatar"/></svg>
<div class="t" style="left:589.80px;top:1153.25px;font-size:14px;color:#15263b;letter-spacing:-0.15px;">todaywasawesome</div>
<div class="t" style="left:832.40px;top:1155.24px;font-size:12px;color:#6b8099;">04-Nov-24, 10:47</div>
<div class="t" style="left:992.00px;top:1156.18px;font-size:13.6px;color:#1f74d4;font-weight:700;">trio-flow</div>
<svg class="i" style="left:1205.50px;top:1149.10px;width:21.00px;height:21.00px;"><use href="#okc"/></svg>
<svg class="i" style="left:1365.50px;top:1149.10px;width:21.00px;height:21.00px;"><use href="#okc"/></svg>
<svg class="i" style="left:1525.50px;top:1149.10px;width:21.00px;height:21.00px;"><use href="#okc"/></svg>
<svg class="i" style="left:1685.50px;top:1149.10px;width:21.00px;height:21.00px;"><use href="#okc"/></svg>
<div class="r" style="left:413.00px;top:1188.00px;width:1361.00px;height:59.00px;background:#fff"></div>
<div class="r" style="left:413.00px;top:1247.00px;width:1361.00px;height:1.00px;background:#dbe5f2"></div>
<svg class="i" style="left:428.00px;top:1211.50px;width:13.00px;height:13.00px;color:#e8453c;"><use href="#warn"/></svg>
<div class="t" style="left:444.80px;top:1211.65px;font-size:13.4px;color:#e8453c;font-weight:700;">bc354bfd9</div>
<svg class="i" style="left:559.00px;top:1205.80px;width:24.00px;height:24.00px;"><use href="#avatar"/></svg>
<div class="t" style="left:587.80px;top:1209.25px;font-size:14px;color:#15263b;letter-spacing:-0.15px;">todaywasawesome</div>
<div class="t" style="left:830.40px;top:1211.24px;font-size:12px;color:#6b8099;">03-Nov-24, 18:47</div>
<div class="t" style="left:990.00px;top:1212.18px;font-size:13.6px;color:#1f74d4;font-weight:700;">trio-flow</div>
<svg class="i" style="left:1203.50px;top:1205.80px;width:21.00px;height:21.00px;"><use href="#okc"/></svg>
<svg class="i" style="left:1363.50px;top:1205.80px;width:21.00px;height:21.00px;"><use href="#okc"/></svg>
<svg class="i" style="left:1523.50px;top:1205.80px;width:21.00px;height:21.00px;"><use href="#okc"/></svg>
<svg class="i" style="left:1683.50px;top:1205.80px;width:21.00px;height:21.00px;"><use href="#errc"/></svg>
<div class="r" style="left:413.00px;top:1248.00px;width:1361.00px;height:59.00px;background:#f5f6fd"></div>
<svg class="i" style="left:428.00px;top:1271.50px;width:13.00px;height:13.00px;color:#e8453c;"><use href="#warn"/></svg>
<div class="t" style="left:444.80px;top:1271.65px;font-size:13.4px;color:#e8453c;font-weight:700;">41599e56b</div>
<svg class="i" style="left:559.00px;top:1265.80px;width:24.00px;height:24.00px;"><use href="#avatar"/></svg>
<div class="t" style="left:587.80px;top:1269.25px;font-size:14px;color:#15263b;letter-spacing:-0.15px;">todaywasawesome</div>
<div class="t" style="left:830.40px;top:1271.24px;font-size:12px;color:#6b8099;">03-Nov-24, 14:53</div>
<div class="t" style="left:990.00px;top:1272.18px;font-size:13.6px;color:#1f74d4;font-weight:700;">trio-flow</div>
<svg class="i" style="left:1203.50px;top:1265.80px;width:21.00px;height:21.00px;"><use href="#okc"/></svg>
<svg class="i" style="left:1363.50px;top:1265.80px;width:21.00px;height:21.00px;"><use href="#okc"/></svg>
<svg class="i" style="left:1523.50px;top:1265.80px;width:21.00px;height:21.00px;"><use href="#errc"/></svg>
<svg class="i" style="left:1683.50px;top:1265.80px;width:21.00px;height:21.00px;"><use href="#clockc"/></svg>
</div></div>
<div class="r" style="left:402.00px;top:1187.00px;width:1.00px;height:117.00px;background:#fff"></div>
</div></body></html>
